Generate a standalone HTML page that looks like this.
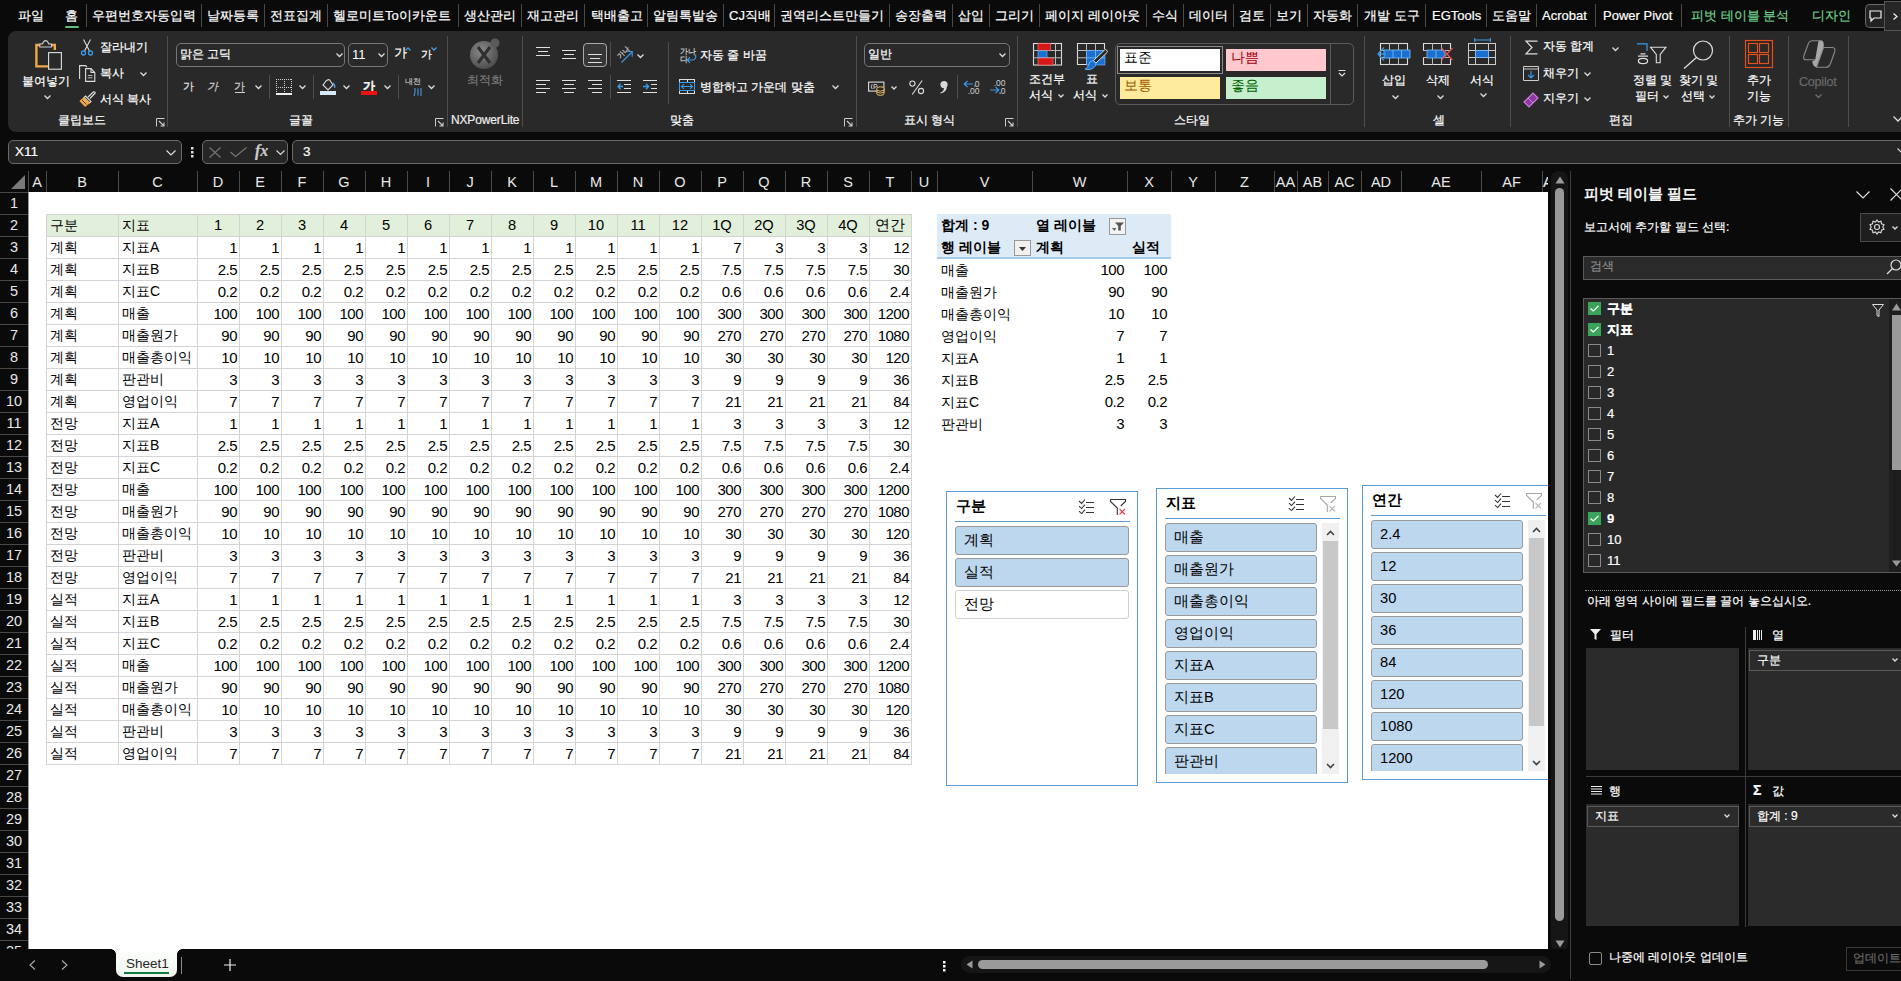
<!DOCTYPE html><html><head><meta charset="utf-8"><style>
*{margin:0;padding:0;box-sizing:border-box}
html,body{width:1901px;height:981px;overflow:hidden;background:#0a0a0a}
body{position:relative;font-family:"Liberation Sans",sans-serif;color:#fff}
div{position:absolute}
.t{white-space:nowrap;font-size:13px;line-height:16px}
.r{font-size:12px}
.t{-webkit-text-stroke:0.2px currentColor}
#sheet .t,.h{-webkit-text-stroke:0}
svg{position:absolute;overflow:visible}
</style></head><body><div class="t" style="left:18px;top:8px;">파일</div>
<div class="t" style="left:65px;top:8px;">홈</div>
<div class="t" style="left:92px;top:8px;">우편번호자동입력</div>
<div class="t" style="left:207px;top:8px;">날짜등록</div>
<div class="t" style="left:270px;top:8px;">전표집계</div>
<div class="t" style="left:333px;top:8px;">헬로미트To이카운트</div>
<div class="t" style="left:464px;top:8px;">생산관리</div>
<div class="t" style="left:527px;top:8px;">재고관리</div>
<div class="t" style="left:591px;top:8px;">택배출고</div>
<div class="t" style="left:653px;top:8px;">알림톡발송</div>
<div class="t" style="left:729px;top:8px;">CJ직배</div>
<div class="t" style="left:780px;top:8px;">권역리스트만들기</div>
<div class="t" style="left:895px;top:8px;">송장출력</div>
<div class="t" style="left:958px;top:8px;">삽입</div>
<div class="t" style="left:995px;top:8px;">그리기</div>
<div class="t" style="left:1045px;top:8px;">페이지 레이아웃</div>
<div class="t" style="left:1152px;top:8px;">수식</div>
<div class="t" style="left:1189px;top:8px;">데이터</div>
<div class="t" style="left:1239px;top:8px;">검토</div>
<div class="t" style="left:1276px;top:8px;">보기</div>
<div class="t" style="left:1313px;top:8px;">자동화</div>
<div class="t" style="left:1364px;top:8px;">개발 도구</div>
<div class="t" style="left:1432px;top:8px;">EGTools</div>
<div class="t" style="left:1492px;top:8px;">도움말</div>
<div class="t" style="left:1542px;top:8px;">Acrobat</div>
<div class="t" style="left:1603px;top:8px;">Power Pivot</div>
<div style="left:86px;top:4px;width:1px;height:23px;background:#4a4a4a"></div>
<div style="left:201px;top:4px;width:1px;height:23px;background:#4a4a4a"></div>
<div style="left:264px;top:4px;width:1px;height:23px;background:#4a4a4a"></div>
<div style="left:327px;top:4px;width:1px;height:23px;background:#4a4a4a"></div>
<div style="left:458px;top:4px;width:1px;height:23px;background:#4a4a4a"></div>
<div style="left:521px;top:4px;width:1px;height:23px;background:#4a4a4a"></div>
<div style="left:584px;top:4px;width:1px;height:23px;background:#4a4a4a"></div>
<div style="left:647px;top:4px;width:1px;height:23px;background:#4a4a4a"></div>
<div style="left:723px;top:4px;width:1px;height:23px;background:#4a4a4a"></div>
<div style="left:774px;top:4px;width:1px;height:23px;background:#4a4a4a"></div>
<div style="left:889px;top:4px;width:1px;height:23px;background:#4a4a4a"></div>
<div style="left:952px;top:4px;width:1px;height:23px;background:#4a4a4a"></div>
<div style="left:989px;top:4px;width:1px;height:23px;background:#4a4a4a"></div>
<div style="left:1039px;top:4px;width:1px;height:23px;background:#4a4a4a"></div>
<div style="left:1146px;top:4px;width:1px;height:23px;background:#4a4a4a"></div>
<div style="left:1183px;top:4px;width:1px;height:23px;background:#4a4a4a"></div>
<div style="left:1233px;top:4px;width:1px;height:23px;background:#4a4a4a"></div>
<div style="left:1270px;top:4px;width:1px;height:23px;background:#4a4a4a"></div>
<div style="left:1307px;top:4px;width:1px;height:23px;background:#4a4a4a"></div>
<div style="left:1357px;top:4px;width:1px;height:23px;background:#4a4a4a"></div>
<div style="left:1425px;top:4px;width:1px;height:23px;background:#4a4a4a"></div>
<div style="left:1486px;top:4px;width:1px;height:23px;background:#4a4a4a"></div>
<div style="left:1536px;top:4px;width:1px;height:23px;background:#4a4a4a"></div>
<div style="left:1595px;top:4px;width:1px;height:23px;background:#4a4a4a"></div>
<div style="left:1681px;top:4px;width:1px;height:23px;background:#4a4a4a"></div>
<div class="t" style="left:1691px;top:8px;color:#6fd08c">피벗 테이블 분석</div>
<div class="t" style="left:1812px;top:8px;color:#6fd08c">디자인</div>
<div style="left:65px;top:26px;width:14px;height:2px;background:#5dbb7e;border-radius:1px"></div>
<div style="left:1865px;top:4px;width:22px;height:24px;border:1px solid #6a6a6a;border-right:none;border-radius:5px 0 0 5px;background:#222"></div>
<svg style="left:1869px;top:10px;" width="13" height="12" viewBox="0 0 13 12"><path d="M1 1 H12 V8 H5 L2 11 V8 H1 Z" fill="none" stroke="#eee" stroke-width="1.2"/></svg>
<div style="left:1884px;top:1px;width:17px;height:30px;background:#262626;border:1px solid #555;border-right:none"></div>
<svg style="left:1893px;top:13px;" width="5" height="7" viewBox="0 0 5 7"><path d="M0.5 0.5 L4 3.5 L0.5 6.5" fill="none" stroke="#eee" stroke-width="1.2"/></svg>
<div style="left:8px;top:31px;width:1901px;height:101px;background:#292929;border-radius:8px"></div>
<svg style="left:34px;top:40px;" width="30" height="31" viewBox="0 0 30 31"><path d="M20.8 10 V5 H2.4 V26.4 H14" fill="none" stroke="#f0a848" stroke-width="2.4"/>
<path d="M5.8 7 V4 H8.5 Q9.5 0.6 11.6 0.6 Q13.7 0.6 14.7 4 H17.5 V7 Z" fill="#292929" stroke="#ccc" stroke-width="1.1"/>
<rect x="14.6" y="12.6" width="12.8" height="16.6" fill="#292929" stroke="#e0e0e0" stroke-width="1.1"/></svg>
<div class="t r" style="left:22px;top:73px;">붙여넣기</div>
<svg style="left:44px;top:95px;" width="7" height="4.5" viewBox="0 0 7 4.5"><path d="M0.5 0.5 L3.5 3.5 L6.5 0.5" fill="none" stroke="#ddd" stroke-width="1.3"/></svg>
<svg style="left:81px;top:39px;" width="12" height="17" viewBox="0 0 12 17"><path d="M2.5 0.5 L8.5 12 M9.5 0.5 L3.5 12" stroke="#ddd" stroke-width="1.1" fill="none"/>
<circle cx="2.5" cy="14" r="2" fill="none" stroke="#3a9ae8" stroke-width="1.3"/><circle cx="9.5" cy="14" r="2" fill="none" stroke="#3a9ae8" stroke-width="1.3"/></svg>
<div class="t r" style="left:100px;top:39px;">잘라내기</div>
<svg style="left:79px;top:65px;" width="17" height="17" viewBox="0 0 17 17"><path d="M0.6 14 V0.6 H6.5 L8 2" fill="none" stroke="#ddd" stroke-width="1.1"/>
<path d="M6.6 3.6 H12 L15.8 7.4 V16.4 H6.6 Z M12 3.6 V7.4 H15.8" fill="#292929" stroke="#ddd" stroke-width="1.1"/><path d="M8.8 10.5 H13.5 M8.8 12.8 H13.5" stroke="#ccc" stroke-width="0.9"/></svg>
<div class="t r" style="left:100px;top:65px;">복사</div>
<svg style="left:140px;top:72px;" width="7" height="4.5" viewBox="0 0 7 4.5"><path d="M0.5 0.5 L3.5 3.5 L6.5 0.5" fill="none" stroke="#ddd" stroke-width="1.3"/></svg>
<svg style="left:79px;top:91px;" width="17" height="16" viewBox="0 0 17 16"><path d="M9 6 L14.5 0.8 Q16 0.5 16.2 2 L11 7.5" fill="none" stroke="#ddd" stroke-width="1.2"/>
<path d="M6.5 5 L12 10.5 L10.5 12 L5 6.5 Z" fill="none" stroke="#ddd" stroke-width="1.1"/>
<path d="M5 6.5 L10.5 12 Q8 14 6 15.5 L0.8 10 Q3 8 5 6.5 Z" fill="#f0a848" stroke="#f0a848" stroke-width="0.8"/>
<path d="M3 9 L7.5 13.5" stroke="#292929" stroke-width="0.8"/></svg>
<div class="t r" style="left:100px;top:91px;">서식 복사</div>
<div class="t r" style="left:58px;top:112px;">클립보드</div>
<svg style="left:156px;top:118px;" width="9" height="9" viewBox="0 0 9 9"><path d="M0.5 8.5 V0.5 H8.5" fill="none" stroke="#ccc" stroke-width="1"/><path d="M3 3 L8 8 M8 4.5 V8 H4.5" fill="none" stroke="#ccc" stroke-width="1.1"/></svg>
<div style="left:167px;top:36px;width:1px;height:91px;background:#4d4d4d"></div>
<div style="left:176px;top:43px;width:169px;height:24px;border:1px solid #777;border-radius:5px"></div>
<div class="t r" style="left:180px;top:46px;">맑은 고딕</div>
<svg style="left:336px;top:53px;" width="7" height="4.5" viewBox="0 0 7 4.5"><path d="M0.5 0.5 L3.5 3.5 L6.5 0.5" fill="none" stroke="#ddd" stroke-width="1.3"/></svg>
<div style="left:348px;top:43px;width:40px;height:24px;border:1px solid #777;border-radius:5px"></div>
<div class="t r" style="left:352px;top:47px;font-size:13px;-webkit-text-stroke:0">11</div>
<svg style="left:378px;top:53px;" width="7" height="4.5" viewBox="0 0 7 4.5"><path d="M0.5 0.5 L3.5 3.5 L6.5 0.5" fill="none" stroke="#ddd" stroke-width="1.3"/></svg>
<div class="t r" style="left:394px;top:45px;font-size:12.5px">가</div>
<svg style="left:405px;top:47px;" width="6" height="4" viewBox="0 0 6 4"><path d="M0.5 3.5 L3 0.8 L5.5 3.5" fill="none" stroke="#49a3f0" stroke-width="1.2"/></svg>
<div class="t r" style="left:421px;top:46px;font-size:11px">가</div>
<svg style="left:431px;top:47px;" width="6" height="4" viewBox="0 0 6 4"><path d="M0.5 0.5 L3 3.2 L5.5 0.5" fill="none" stroke="#49a3f0" stroke-width="1.2"/></svg>
<div class="t r" style="left:183px;top:78px;font-size:11px;color:#e0e0e0">가</div>
<div class="t r" style="left:208px;top:78px;font-size:11px;color:#d0d0d0;transform:skewX(-14deg)">가</div>
<div class="t r" style="left:234px;top:78px;font-size:11px;color:#d0d0d0">가</div>
<div style="left:235px;top:92px;width:10px;height:1px;background:#d0d0d0"></div>
<svg style="left:255px;top:85px;" width="7" height="4.5" viewBox="0 0 7 4.5"><path d="M0.5 0.5 L3.5 3.5 L6.5 0.5" fill="none" stroke="#ddd" stroke-width="1.3"/></svg>
<div style="left:269px;top:75px;width:1px;height:24px;background:#4d4d4d"></div>
<svg style="left:276px;top:79px;" width="16" height="16" viewBox="0 0 16 16"><g shape-rendering="crispEdges"><path d="M0.5 0 V15 M15.5 0 V15 M0 0.5 H16 M8.5 0 V15 M0 8.5 H16" fill="none" stroke="#d0d0d0" stroke-width="1" stroke-dasharray="1 1"/><path d="M0 15 H16" stroke="#f0f0f0" stroke-width="1.6"/></g></svg>
<svg style="left:299px;top:85px;" width="7" height="4.5" viewBox="0 0 7 4.5"><path d="M0.5 0.5 L3.5 3.5 L6.5 0.5" fill="none" stroke="#ddd" stroke-width="1.3"/></svg>
<div style="left:313px;top:75px;width:1px;height:24px;background:#4d4d4d"></div>
<svg style="left:320px;top:78px;" width="17" height="18" viewBox="0 0 17 18"><path d="M6 3 L3 7 L8 12 L13 7 L10 2.5 Q9 1 7.5 2 Z" fill="none" stroke="#ddd" stroke-width="1.1"/><path d="M13 5 Q15.5 7 14.5 10" stroke="#4aa3f0" fill="none" stroke-width="1.3"/><rect x="0" y="13" width="16" height="4" fill="#d5e8f7"/></svg>
<svg style="left:343px;top:85px;" width="7" height="4.5" viewBox="0 0 7 4.5"><path d="M0.5 0.5 L3.5 3.5 L6.5 0.5" fill="none" stroke="#ddd" stroke-width="1.3"/></svg>
<div class="t r" style="left:363px;top:78px;font-size:11.5px;font-weight:bold;color:#eee">가</div>
<div style="left:361px;top:91px;width:16px;height:4px;background:#ee1111"></div>
<svg style="left:384px;top:85px;" width="7" height="4.5" viewBox="0 0 7 4.5"><path d="M0.5 0.5 L3.5 3.5 L6.5 0.5" fill="none" stroke="#ddd" stroke-width="1.3"/></svg>
<div style="left:398px;top:75px;width:1px;height:24px;background:#4d4d4d"></div>
<div class="t r" style="left:405px;top:77px;font-size:8px;color:#bbb;line-height:10px">내천</div>
<svg style="left:414px;top:88px;" width="8" height="8" viewBox="0 0 8 8"><path d="M1 0 Q1.5 5 0 8 M4 0.5 V7.5 M7 0 V8" stroke="#4aa3f0" stroke-width="1" fill="none"/></svg>
<svg style="left:428px;top:85px;" width="7" height="4.5" viewBox="0 0 7 4.5"><path d="M0.5 0.5 L3.5 3.5 L6.5 0.5" fill="none" stroke="#ddd" stroke-width="1.3"/></svg>
<div class="t r" style="left:289px;top:112px;">글꼴</div>
<svg style="left:435px;top:118px;" width="9" height="9" viewBox="0 0 9 9"><path d="M0.5 8.5 V0.5 H8.5" fill="none" stroke="#ccc" stroke-width="1"/><path d="M3 3 L8 8 M8 4.5 V8 H4.5" fill="none" stroke="#ccc" stroke-width="1.1"/></svg>
<div style="left:447px;top:36px;width:1px;height:91px;background:#4d4d4d"></div>
<svg style="left:468px;top:38px;" width="34" height="32" viewBox="0 0 34 32"><defs><radialGradient id="g1" cx="40%" cy="35%" r="70%"><stop offset="0" stop-color="#8a8a8a"/><stop offset="1" stop-color="#4a4a4a"/></radialGradient></defs>
<circle cx="16" cy="17" r="14" fill="url(#g1)"/><circle cx="27" cy="5" r="4.5" fill="#5a5a5a"/>
<path d="M10 9 L22 25 M22 9 L10 25" stroke="#2f2f2f" stroke-width="3"/></svg>
<div class="t r" style="left:467px;top:72px;color:#7a7a7a">최적화</div>
<div class="t r" style="left:451px;top:112px;font-size:12px;letter-spacing:-0.15px;color:#eee">NXPowerLite</div>
<div style="left:522px;top:36px;width:1px;height:91px;background:#4d4d4d"></div>
<svg style="left:536px;top:46px;" width="14" height="12" viewBox="0 0 14 12"><g shape-rendering="crispEdges"><path d="M0 1.5 H14" stroke="#e0e0e0" stroke-width="1"/><path d="M2 5.5 H12" stroke="#e0e0e0" stroke-width="1"/><path d="M0 9.5 H14" stroke="#e0e0e0" stroke-width="1"/></g></svg>
<svg style="left:562px;top:49px;" width="14" height="12" viewBox="0 0 14 12"><g shape-rendering="crispEdges"><path d="M0 1.5 H14" stroke="#e0e0e0" stroke-width="1"/><path d="M2 5.5 H12" stroke="#e0e0e0" stroke-width="1"/><path d="M0 9.5 H14" stroke="#e0e0e0" stroke-width="1"/></g></svg>
<div style="left:583px;top:43px;width:24px;height:24px;border:1px solid #aaa;border-radius:4px;background:#363636"></div>
<svg style="left:588px;top:53px;" width="14" height="12" viewBox="0 0 14 12"><g shape-rendering="crispEdges"><path d="M0 1.5 H14" stroke="#e0e0e0" stroke-width="1"/><path d="M2 5.5 H12" stroke="#e0e0e0" stroke-width="1"/><path d="M0 9.5 H14" stroke="#e0e0e0" stroke-width="1"/></g></svg>
<div style="left:610px;top:42px;width:1px;height:25px;background:#4d4d4d"></div>
<svg style="left:616px;top:46px;" width="18" height="18" viewBox="0 0 18 18"><path d="M5.5 16.5 L15.5 6.5 M11 5.5 H16.2 V10.7" stroke="#3a9ae8" stroke-width="1.2" fill="none"/></svg>
<div class="t r" style="left:617px;top:49px;font-size:7px;color:#ccc;transform:rotate(-45deg);line-height:8px">가나</div>
<svg style="left:637px;top:54px;" width="7" height="4.5" viewBox="0 0 7 4.5"><path d="M0.5 0.5 L3.5 3.5 L6.5 0.5" fill="none" stroke="#ddd" stroke-width="1.3"/></svg>
<svg style="left:536px;top:80px;" width="14" height="14" viewBox="0 0 14 14"><g shape-rendering="crispEdges"><path d="M0 0.5 H14" stroke="#e0e0e0" stroke-width="1"/><path d="M0 4.5 H10" stroke="#e0e0e0" stroke-width="1"/><path d="M0 8.5 H14" stroke="#e0e0e0" stroke-width="1"/><path d="M0 12.5 H10" stroke="#e0e0e0" stroke-width="1"/></g></svg>
<svg style="left:562px;top:80px;" width="14" height="14" viewBox="0 0 14 14"><g shape-rendering="crispEdges"><path d="M0 0.5 H14" stroke="#e0e0e0" stroke-width="1"/><path d="M2 4.5 H12" stroke="#e0e0e0" stroke-width="1"/><path d="M0 8.5 H14" stroke="#e0e0e0" stroke-width="1"/><path d="M2 12.5 H12" stroke="#e0e0e0" stroke-width="1"/></g></svg>
<svg style="left:588px;top:80px;" width="14" height="14" viewBox="0 0 14 14"><g shape-rendering="crispEdges"><path d="M0 0.5 H14" stroke="#e0e0e0" stroke-width="1"/><path d="M4 4.5 H14" stroke="#e0e0e0" stroke-width="1"/><path d="M0 8.5 H14" stroke="#e0e0e0" stroke-width="1"/><path d="M4 12.5 H14" stroke="#e0e0e0" stroke-width="1"/></g></svg>
<div style="left:610px;top:75px;width:1px;height:24px;background:#4d4d4d"></div>
<svg style="left:617px;top:80px;" width="14" height="14" viewBox="0 0 14 14"><g shape-rendering="crispEdges"><path d="M0 0.5 H14" stroke="#e0e0e0" stroke-width="1"/><path d="M7 4.5 H14" stroke="#e0e0e0" stroke-width="1"/><path d="M7 8.5 H14" stroke="#e0e0e0" stroke-width="1"/><path d="M0 12.5 H14" stroke="#e0e0e0" stroke-width="1"/></g><path d="M6 6.5 H1 M3.6 3.8 L1 6.5 L3.6 9.2" stroke="#3a9ae8" stroke-width="1.3" fill="none"/></svg>
<svg style="left:643px;top:80px;" width="14" height="14" viewBox="0 0 14 14"><g shape-rendering="crispEdges"><path d="M0 0.5 H14" stroke="#e0e0e0" stroke-width="1"/><path d="M8 4.5 H14" stroke="#e0e0e0" stroke-width="1"/><path d="M8 8.5 H14" stroke="#e0e0e0" stroke-width="1"/><path d="M0 12.5 H14" stroke="#e0e0e0" stroke-width="1"/></g><path d="M0 6.5 H5.5 M3 3.8 L5.6 6.5 L3 9.2" stroke="#3a9ae8" stroke-width="1.3" fill="none"/></svg>
<div style="left:668px;top:42px;width:1px;height:62px;background:#4d4d4d"></div>
<div class="t r" style="left:680px;top:48px;font-size:7.5px;color:#d0d0d0;line-height:8px">가나<br>다</div>
<svg style="left:686px;top:54px;" width="11" height="10" viewBox="0 0 11 10"><path d="M9.5 0.5 Q10.5 5 7 6 H1.5 M4 3.2 L1.2 6 L4 8.8" stroke="#3a9ae8" stroke-width="1.2" fill="none"/></svg>
<div class="t r" style="left:700px;top:47px;">자동 줄 바꿈</div>
<svg style="left:679px;top:79px;" width="16" height="15" viewBox="0 0 16 15"><g shape-rendering="crispEdges"><rect x="0.5" y="0.5" width="15" height="14" fill="none" stroke="#ddd"/><path d="M8 0 V3 M8 12 V15" stroke="#ddd"/><rect x="0.5" y="3.5" width="15" height="8" fill="none" stroke="#3a9ae8"/></g><path d="M2.5 7.5 H13.5 M5 5.2 L2.5 7.5 L5 9.8 M11 5.2 L13.5 7.5 L11 9.8" stroke="#3a9ae8" stroke-width="1.1" fill="none"/></svg>
<div class="t r" style="left:700px;top:79px;">병합하고 가운데 맞춤</div>
<svg style="left:832px;top:85px;" width="7" height="4.5" viewBox="0 0 7 4.5"><path d="M0.5 0.5 L3.5 3.5 L6.5 0.5" fill="none" stroke="#ddd" stroke-width="1.3"/></svg>
<div class="t r" style="left:670px;top:112px;">맞춤</div>
<svg style="left:844px;top:118px;" width="9" height="9" viewBox="0 0 9 9"><path d="M0.5 8.5 V0.5 H8.5" fill="none" stroke="#ccc" stroke-width="1"/><path d="M3 3 L8 8 M8 4.5 V8 H4.5" fill="none" stroke="#ccc" stroke-width="1.1"/></svg>
<div style="left:856px;top:36px;width:1px;height:91px;background:#4d4d4d"></div>
<div style="left:864px;top:43px;width:146px;height:24px;border:1px solid #777;border-radius:5px"></div>
<div class="t r" style="left:868px;top:46px;">일반</div>
<svg style="left:999px;top:53px;" width="7" height="4.5" viewBox="0 0 7 4.5"><path d="M0.5 0.5 L3.5 3.5 L6.5 0.5" fill="none" stroke="#ddd" stroke-width="1.3"/></svg>
<svg style="left:868px;top:81px;" width="18" height="15" viewBox="0 0 18 15"><rect x="0.6" y="1.1" width="15.3" height="9" fill="none" stroke="#ddd" stroke-width="1.1"/>
<path d="M4.2 3.3 Q2.4 5.6 4.2 8" fill="none" stroke="#ccc" stroke-width="1"/><path d="M6 8 V3.5 H8 Q9.2 3.5 9.2 4.8 Q9.2 6 8 6 H6" fill="none" stroke="#ccc" stroke-width="0.9"/>
<path d="M8.8 7.5 Q8.8 5.8 12.4 5.8 Q16 5.8 16 7.5 V12.6 Q16 14.3 12.4 14.3 Q8.8 14.3 8.8 12.6 Z" fill="#292929" stroke="#f3c46a" stroke-width="1"/>
<path d="M8.8 9.3 Q12.4 11 16 9.3 M8.8 11.2 Q12.4 12.9 16 11.2" fill="none" stroke="#f3c46a" stroke-width="0.9"/></svg>
<svg style="left:891px;top:86px;" width="6" height="4.0" viewBox="0 0 6 4.0"><path d="M0.5 0.5 L3.0 3.0 L5.5 0.5" fill="none" stroke="#ddd" stroke-width="1.3"/></svg>
<svg style="left:909px;top:80px;" width="16" height="15" viewBox="0 0 16 15"><circle cx="3.4" cy="3.6" r="2.6" fill="none" stroke="#ddd" stroke-width="1.1"/><circle cx="12" cy="11" r="2.6" fill="none" stroke="#ddd" stroke-width="1.1"/><path d="M13.2 0.5 L3.2 14.5" stroke="#ddd" stroke-width="1.1"/></svg>
<svg style="left:939px;top:80px;" width="9" height="14" viewBox="0 0 9 14"><circle cx="5" cy="4.6" r="3.6" fill="#d8d8d8"/><path d="M7.6 6.4 Q8.4 11.5 1.5 13.6 L1.2 12.8 Q5 11.2 5 8 Z" fill="#d8d8d8"/></svg>
<div style="left:957px;top:75px;width:1px;height:24px;background:#4d4d4d"></div>
<svg style="left:963px;top:79px;" width="18" height="16" viewBox="0 0 18 16"><path d="M10 5 H1.5 M4.5 2 L1.2 5 L4.5 8" stroke="#3a9ae8" stroke-width="1.2" fill="none"/>
<text x="16.5" y="7.6" font-family="Liberation Sans" font-size="8.5" fill="#d0d0d0" text-anchor="end">0</text>
<text x="16.5" y="15.2" font-family="Liberation Sans" font-size="8.5" fill="#d0d0d0" text-anchor="end">.00</text>
<rect x="11.3" y="6.4" width="1.2" height="1.2" fill="#d0d0d0"/></svg>
<svg style="left:989px;top:78px;" width="18" height="17" viewBox="0 0 18 17"><text x="16.5" y="7.6" font-family="Liberation Sans" font-size="8.5" fill="#d0d0d0" text-anchor="end">.00</text>
<text x="16.5" y="15.8" font-family="Liberation Sans" font-size="8.5" fill="#d0d0d0" text-anchor="end">0</text>
<path d="M1 12 H9.5 M6.5 9 L9.8 12 L6.5 15" stroke="#3a9ae8" stroke-width="1.2" fill="none"/><rect x="10.5" y="14.6" width="1.2" height="1.2" fill="#d0d0d0"/></svg>
<div class="t r" style="left:904px;top:112px;">표시 형식</div>
<svg style="left:1005px;top:118px;" width="9" height="9" viewBox="0 0 9 9"><path d="M0.5 8.5 V0.5 H8.5" fill="none" stroke="#ccc" stroke-width="1"/><path d="M3 3 L8 8 M8 4.5 V8 H4.5" fill="none" stroke="#ccc" stroke-width="1.1"/></svg>
<div style="left:1017px;top:36px;width:1px;height:91px;background:#4d4d4d"></div>
<svg style="left:1033px;top:43px;" width="29" height="23" viewBox="0 0 29 23"><rect x="0.5" y="0.5" width="28" height="21.5" fill="none" stroke="#ddd" stroke-width="1.1"/>
<path d="M22.5 0 V22 M0 7.5 H29 M0 14.8 H29" stroke="#bbb" stroke-width="1"/>
<rect x="5" y="0.5" width="12.5" height="7" fill="#d81818" stroke="#f08080" stroke-width="0.6"/>
<rect x="5" y="7.8" width="9" height="6.7" fill="#1a6fd0" stroke="#7cc0f8" stroke-width="0.6"/>
<rect x="5" y="15" width="15" height="7" fill="#d81818" stroke="#f08080" stroke-width="0.6"/></svg>
<div class="t r" style="left:1029px;top:71px;">조건부</div>
<div class="t r" style="left:1029px;top:87px;">서식</div>
<svg style="left:1058px;top:94px;" width="6" height="4.0" viewBox="0 0 6 4.0"><path d="M0.5 0.5 L3.0 3.0 L5.5 0.5" fill="none" stroke="#ddd" stroke-width="1.3"/></svg>
<svg style="left:1077px;top:43px;" width="32" height="28" viewBox="0 0 32 28"><path d="M27.5 6 V0.5 H0.5 V21.5 H10" fill="none" stroke="#ddd" stroke-width="1.1"/>
<path d="M9.5 0 V22 M18.5 0 V7 M0 7.5 H28 M0 14.8 H9" stroke="#bbb" stroke-width="1"/>
<rect x="9.5" y="7.5" width="18.5" height="14.5" fill="#1a6fd0" stroke="#7cc0f8" stroke-width="0.6"/>
<path d="M18.5 7.5 V22 M9.5 14.8 H28" stroke="#7cc0f8" stroke-width="0.8"/>
<path d="M29.5 7 Q31 8.5 30 9.5 L19 20 L16.5 17.5 L27.5 7 Q28.5 6 29.5 7 Z" fill="#292929" stroke="#ddd" stroke-width="1"/>
<path d="M16 17.5 L19 20.5 Q18.5 25 13 26.5 Q9.5 27 8 26 Q11 25 11.5 22 Q12.5 18 16 17.5 Z" fill="#1a6fd0" stroke="#7cc0f8" stroke-width="0.8"/></svg>
<div class="t r" style="left:1086px;top:71px;">표</div>
<div class="t r" style="left:1073px;top:87px;">서식</div>
<svg style="left:1102px;top:94px;" width="6" height="4.0" viewBox="0 0 6 4.0"><path d="M0.5 0.5 L3.0 3.0 L5.5 0.5" fill="none" stroke="#ddd" stroke-width="1.3"/></svg>
<div style="left:1115px;top:43px;width:239px;height:62px;border:1px solid #5a5a5a;border-radius:5px"></div>
<div style="left:1330px;top:43px;width:1px;height:62px;background:#5a5a5a"></div>
<svg style="left:1338px;top:70px;" width="8" height="7" viewBox="0 0 8 7"><path d="M0.5 0.5 H7.5" stroke="#ddd"/><path d="M1 3 L4 6 L7 3" fill="none" stroke="#ddd" stroke-width="1.2"/></svg>
<div style="left:1117px;top:46px;width:106px;height:28px;border:1px solid #8a8a8a"></div>
<div style="left:1120px;top:49px;width:100px;height:22px;background:#fff"></div>
<div class="t r" style="left:1124px;top:49px;-webkit-text-stroke:0;font-size:14px;color:#000">표준</div>
<div style="left:1226px;top:49px;width:100px;height:22px;background:#ffc7ce"></div>
<div class="t r" style="left:1231px;top:49px;-webkit-text-stroke:0;font-size:14px;color:#9c0006">나쁨</div>
<div style="left:1120px;top:77px;width:100px;height:22px;background:#ffeb9c"></div>
<div class="t r" style="left:1124px;top:77px;-webkit-text-stroke:0;font-size:14px;color:#9c5700">보통</div>
<div style="left:1226px;top:77px;width:100px;height:22px;background:#c6efce"></div>
<div class="t r" style="left:1231px;top:77px;-webkit-text-stroke:0;font-size:14px;color:#006100">좋음</div>
<div class="t r" style="left:1174px;top:112px;">스타일</div>
<div style="left:1364px;top:36px;width:1px;height:91px;background:#4d4d4d"></div>
<svg style="left:1377px;top:43px;" width="34" height="22" viewBox="0 0 34 22"><rect x="3.5" y="0.5" width="27" height="21" fill="none" stroke="#ddd" stroke-width="1.1"/>
<path d="M12.5 0 V22 M21.5 0 V22 M3 7.5 H31 M3 14.5 H31" stroke="#bbb"/>
<rect x="7" y="7" width="26" height="8" fill="#1a6fd0" stroke="#7cc0f8" stroke-width="0.8"/><path d="M16 7 V15 M24.5 7 V15" stroke="#7cc0f8" stroke-width="0.8"/>
<path d="M14 11 H1.5 M7 4.5 L1 11 L7 17.5" stroke="#3a9ae8" stroke-width="1.3" fill="none"/><path d="M9 9 H14 V13 H9" fill="#1a6fd0"/></svg>
<div class="t r" style="left:1382px;top:72px;">삽입</div>
<svg style="left:1392px;top:95px;" width="7" height="4.5" viewBox="0 0 7 4.5"><path d="M0.5 0.5 L3.5 3.5 L6.5 0.5" fill="none" stroke="#ddd" stroke-width="1.3"/></svg>
<svg style="left:1423px;top:43px;" width="32" height="22" viewBox="0 0 32 22"><path d="M0.5 7 V0.5 H27.5 V6 M0.5 15 V21.5 H27.5 V16" fill="none" stroke="#ddd" stroke-width="1.1"/>
<path d="M9.5 0 V7 M18.5 0 V7 M9.5 15 V22 M18.5 15 V22 M0 7.5 H6 M0 14.5 H6 M22 7.5 H28 M22 14.5 H28" stroke="#bbb"/>
<path d="M4 7 H19.5 L22.5 11 L19.5 15 H4 Z" fill="#1a6fd0" stroke="#7cc0f8" stroke-width="0.8"/><path d="M13 7 V15" stroke="#7cc0f8" stroke-width="0.8"/>
<path d="M18.5 5 L29.5 17 M29.5 5 L18.5 17" stroke="#e85050" stroke-width="1.2"/></svg>
<div class="t r" style="left:1426px;top:72px;">삭제</div>
<svg style="left:1437px;top:95px;" width="7" height="4.5" viewBox="0 0 7 4.5"><path d="M0.5 0.5 L3.5 3.5 L6.5 0.5" fill="none" stroke="#ddd" stroke-width="1.3"/></svg>
<svg style="left:1468px;top:43px;" width="28" height="22" viewBox="0 0 28 22"><rect x="0.5" y="0.5" width="27" height="21" fill="none" stroke="#ccc"/><path d="M7.5 0 V22" stroke="#ccc"/><path d="M20.5 0 V22" stroke="#ccc"/><path d="M0 7.5 H28" stroke="#ccc"/><path d="M0 14.5 H28" stroke="#ccc"/><rect x="7.5" y="7.5" width="13" height="7" fill="#1a6fd0" stroke="#7cc0f8" stroke-width="0.8"/></svg>
<svg style="left:1474px;top:38px;" width="17" height="4" viewBox="0 0 17 4"><path d="M0.7 0 V4 M16.3 0 V4 M0.7 2 H16.3" stroke="#3a9ae8" stroke-width="1.2"/></svg>
<div class="t r" style="left:1470px;top:72px;">서식</div>
<svg style="left:1480px;top:93px;" width="7" height="4.5" viewBox="0 0 7 4.5"><path d="M0.5 0.5 L3.5 3.5 L6.5 0.5" fill="none" stroke="#ddd" stroke-width="1.3"/></svg>
<div class="t r" style="left:1433px;top:112px;">셀</div>
<div style="left:1510px;top:36px;width:1px;height:91px;background:#4d4d4d"></div>
<svg style="left:1525px;top:40px;" width="13" height="15" viewBox="0 0 13 15"><path d="M12.5 1.2 H1 L7 7.5 L1 13.8 H12.5" fill="none" stroke="#ddd" stroke-width="1.2"/></svg>
<div class="t r" style="left:1543px;top:38px;">자동 합계</div>
<svg style="left:1612px;top:47px;" width="7" height="4.5" viewBox="0 0 7 4.5"><path d="M0.5 0.5 L3.5 3.5 L6.5 0.5" fill="none" stroke="#ddd" stroke-width="1.3"/></svg>
<svg style="left:1523px;top:66px;" width="16" height="15" viewBox="0 0 16 15"><path d="M0.5 0.5 H15.5 V14.5 H0.5 Z M0.5 3 H15.5" fill="none" stroke="#ccc"/><path d="M8 5 V12 M5 9 L8 12 L11 9" fill="none" stroke="#3a9ae8" stroke-width="1.2"/></svg>
<div class="t r" style="left:1543px;top:65px;">채우기</div>
<svg style="left:1584px;top:72px;" width="7" height="4.5" viewBox="0 0 7 4.5"><path d="M0.5 0.5 L3.5 3.5 L6.5 0.5" fill="none" stroke="#ddd" stroke-width="1.3"/></svg>
<svg style="left:1523px;top:91px;" width="16" height="16" viewBox="0 0 16 16"><path d="M1 11 L10 2 L15 7 L6 16 Z" fill="#8a3a9a" stroke="#d080e0" stroke-width="1.1"/><path d="M5 7 L10 12" stroke="#d080e0"/></svg>
<div class="t r" style="left:1543px;top:90px;">지우기</div>
<svg style="left:1584px;top:97px;" width="7" height="4.5" viewBox="0 0 7 4.5"><path d="M0.5 0.5 L3.5 3.5 L6.5 0.5" fill="none" stroke="#ddd" stroke-width="1.3"/></svg>
<svg style="left:1637px;top:43px;" width="30" height="22" viewBox="0 0 30 22"><path d="M0 0.8 H10 V8" stroke="#3a9ae8" fill="none" stroke-width="1.2"/>
<path d="M3.5 10.8 H8.5 M1 13.2 H11" stroke="#ddd" stroke-width="1.2"/><ellipse cx="6" cy="18" rx="4.6" ry="2.7" fill="none" stroke="#ddd" stroke-width="1.2"/>
<path d="M13.5 4.2 H29 L23.2 11.5 V19.8 H19.3 V11.5 Z" fill="none" stroke="#ddd" stroke-width="1.1"/></svg>
<div class="t r" style="left:1633px;top:72px;">정렬 및</div>
<div class="t r" style="left:1635px;top:88px;">필터</div>
<svg style="left:1663px;top:95px;" width="6" height="4.0" viewBox="0 0 6 4.0"><path d="M0.5 0.5 L3.0 3.0 L5.5 0.5" fill="none" stroke="#ddd" stroke-width="1.3"/></svg>
<svg style="left:1683px;top:40px;" width="30" height="29" viewBox="0 0 30 29"><circle cx="20" cy="10.5" r="9.5" fill="none" stroke="#ddd" stroke-width="1.2"/><path d="M13.5 17.5 L1 28.5" stroke="#ddd" stroke-width="1.3"/></svg>
<div class="t r" style="left:1679px;top:72px;">찾기 및</div>
<div class="t r" style="left:1681px;top:88px;">선택</div>
<svg style="left:1709px;top:95px;" width="6" height="4.0" viewBox="0 0 6 4.0"><path d="M0.5 0.5 L3.0 3.0 L5.5 0.5" fill="none" stroke="#ddd" stroke-width="1.3"/></svg>
<div class="t r" style="left:1609px;top:112px;">편집</div>
<div style="left:1729px;top:36px;width:1px;height:91px;background:#4d4d4d"></div>
<svg style="left:1745px;top:40px;" width="29" height="28" viewBox="0 0 29 28"><g fill="none" stroke="#e8501a" stroke-width="1.15"><rect x="0.5" y="0.5" width="27" height="27"/><rect x="3.5" y="3.5" width="9" height="9"/><rect x="14.5" y="3.5" width="9" height="9"/><rect x="3.5" y="14.5" width="9" height="9"/><rect x="14.5" y="14.5" width="9" height="9"/></g></svg>
<div class="t r" style="left:1747px;top:72px;">추가</div>
<div class="t r" style="left:1747px;top:88px;">기능</div>
<div class="t r" style="left:1733px;top:112px;">추가 기능</div>
<div style="left:1788px;top:36px;width:1px;height:91px;background:#4d4d4d"></div>
<svg style="left:1803px;top:40px;" width="33" height="28" viewBox="0 0 33 28"><path d="M15.5 0.8 L19 0.8 Q21.5 2 20.5 7.5 L13.5 27.3 Q10 26.5 9.2 21.5 L12.2 19.8 Z" fill="#a8a8a8"/>
<path d="M3 19.8 Q0 19.8 0.8 16 L5 4.5 Q6.2 0.8 9.8 0.8 L19 0.8 M12.2 19.8 L3 19.8" fill="none" stroke="#8a8a8a" stroke-width="1.1"/>
<path d="M13.5 27.3 L20.5 7.5 L29 7.5 Q32.8 7.5 31.8 11.5 L27.5 23.5 Q26.3 27.3 22.5 27.3 Z" fill="none" stroke="#8a8a8a" stroke-width="1.1"/></svg>
<div class="t r" style="left:1799px;top:74px;color:#6a6a6a;font-size:12.5px;letter-spacing:-0.2px">Copilot</div>
<svg style="left:1815px;top:94px;" width="7" height="4.5" viewBox="0 0 7 4.5"><path d="M0.5 0.5 L3.5 3.5 L6.5 0.5" fill="none" stroke="#6e6e6e" stroke-width="1.3"/></svg>
<div style="left:1848px;top:36px;width:1px;height:91px;background:#4d4d4d"></div>
<svg style="left:1893px;top:116px;" width="10" height="6.0" viewBox="0 0 10 6.0"><path d="M0.5 0.5 L5.0 5.0 L9.5 0.5" fill="none" stroke="#ddd" stroke-width="1.3"/></svg>
<div style="left:8px;top:140px;width:174px;height:24px;border:1px solid #6a6a6a;border-radius:5px;background:#262626"></div>
<div class="t" style="left:15px;top:144px;font-size:13.5px">X11</div>
<svg style="left:166px;top:150px;" width="10" height="6.0" viewBox="0 0 10 6.0"><path d="M0.5 0.5 L5.0 5.0 L9.5 0.5" fill="none" stroke="#ddd" stroke-width="1.2"/></svg>
<svg style="left:191px;top:147px;" width="3" height="11" viewBox="0 0 3 11"><rect x="0" y="0" width="2.5" height="2.5" fill="#ddd"/><rect x="0" y="4" width="2.5" height="2.5" fill="#ddd"/><rect x="0" y="8" width="2.5" height="2.5" fill="#ddd"/></svg>
<div style="left:202px;top:140px;width:86px;height:24px;border:1px solid #6a6a6a;border-radius:5px;background:#262626"></div>
<svg style="left:209px;top:147px;" width="12" height="11" viewBox="0 0 12 11"><path d="M0.5 0.5 L11.5 10.5 M11.5 0.5 L0.5 10.5" stroke="#777" stroke-width="1.1"/></svg>
<svg style="left:230px;top:147px;" width="17" height="10" viewBox="0 0 17 10"><path d="M0.5 5 L5.5 9.5 L16.5 0.5" stroke="#777" stroke-width="1.1" fill="none"/></svg>
<div class="t" style="left:255px;top:143px;font-family:'Liberation Serif',serif;font-size:16px;color:#ccc;font-weight:bold"><i>fx</i></div>
<svg style="left:276px;top:150px;" width="9" height="5.5" viewBox="0 0 9 5.5"><path d="M0.5 0.5 L4.5 4.5 L8.5 0.5" fill="none" stroke="#ddd" stroke-width="1.1"/></svg>
<div style="left:292px;top:140px;width:1620px;height:24px;border:1px solid #6a6a6a;border-radius:5px;background:#262626"></div>
<div class="t" style="left:303px;top:144px;font-size:13.5px">3</div>
<svg style="left:1897px;top:148px;" width="8" height="5.0" viewBox="0 0 8 5.0"><path d="M0.5 0.5 L4.0 4.0 L7.5 0.5" fill="none" stroke="#ddd" stroke-width="1.1"/></svg>
<div style="left:0;top:171px;width:1548px;height:21px;overflow:hidden">
<div class="t h" style="left:28px;top:2px;width:18px;text-align:center;font-size:14.5px;line-height:18px;color:#e8e8e8">A</div>
<div style="left:46px;top:0;width:1px;height:21px;background:#4a4a4a"></div>
<div class="t h" style="left:46px;top:2px;width:72px;text-align:center;font-size:14.5px;line-height:18px;color:#e8e8e8">B</div>
<div style="left:118px;top:0;width:1px;height:21px;background:#4a4a4a"></div>
<div class="t h" style="left:118px;top:2px;width:79px;text-align:center;font-size:14.5px;line-height:18px;color:#e8e8e8">C</div>
<div style="left:197px;top:0;width:1px;height:21px;background:#4a4a4a"></div>
<div class="t h" style="left:197px;top:2px;width:42px;text-align:center;font-size:14.5px;line-height:18px;color:#e8e8e8">D</div>
<div style="left:239px;top:0;width:1px;height:21px;background:#4a4a4a"></div>
<div class="t h" style="left:239px;top:2px;width:42px;text-align:center;font-size:14.5px;line-height:18px;color:#e8e8e8">E</div>
<div style="left:281px;top:0;width:1px;height:21px;background:#4a4a4a"></div>
<div class="t h" style="left:281px;top:2px;width:42px;text-align:center;font-size:14.5px;line-height:18px;color:#e8e8e8">F</div>
<div style="left:323px;top:0;width:1px;height:21px;background:#4a4a4a"></div>
<div class="t h" style="left:323px;top:2px;width:42px;text-align:center;font-size:14.5px;line-height:18px;color:#e8e8e8">G</div>
<div style="left:365px;top:0;width:1px;height:21px;background:#4a4a4a"></div>
<div class="t h" style="left:365px;top:2px;width:42px;text-align:center;font-size:14.5px;line-height:18px;color:#e8e8e8">H</div>
<div style="left:407px;top:0;width:1px;height:21px;background:#4a4a4a"></div>
<div class="t h" style="left:407px;top:2px;width:42px;text-align:center;font-size:14.5px;line-height:18px;color:#e8e8e8">I</div>
<div style="left:449px;top:0;width:1px;height:21px;background:#4a4a4a"></div>
<div class="t h" style="left:449px;top:2px;width:42px;text-align:center;font-size:14.5px;line-height:18px;color:#e8e8e8">J</div>
<div style="left:491px;top:0;width:1px;height:21px;background:#4a4a4a"></div>
<div class="t h" style="left:491px;top:2px;width:42px;text-align:center;font-size:14.5px;line-height:18px;color:#e8e8e8">K</div>
<div style="left:533px;top:0;width:1px;height:21px;background:#4a4a4a"></div>
<div class="t h" style="left:533px;top:2px;width:42px;text-align:center;font-size:14.5px;line-height:18px;color:#e8e8e8">L</div>
<div style="left:575px;top:0;width:1px;height:21px;background:#4a4a4a"></div>
<div class="t h" style="left:575px;top:2px;width:42px;text-align:center;font-size:14.5px;line-height:18px;color:#e8e8e8">M</div>
<div style="left:617px;top:0;width:1px;height:21px;background:#4a4a4a"></div>
<div class="t h" style="left:617px;top:2px;width:42px;text-align:center;font-size:14.5px;line-height:18px;color:#e8e8e8">N</div>
<div style="left:659px;top:0;width:1px;height:21px;background:#4a4a4a"></div>
<div class="t h" style="left:659px;top:2px;width:42px;text-align:center;font-size:14.5px;line-height:18px;color:#e8e8e8">O</div>
<div style="left:701px;top:0;width:1px;height:21px;background:#4a4a4a"></div>
<div class="t h" style="left:701px;top:2px;width:42px;text-align:center;font-size:14.5px;line-height:18px;color:#e8e8e8">P</div>
<div style="left:743px;top:0;width:1px;height:21px;background:#4a4a4a"></div>
<div class="t h" style="left:743px;top:2px;width:42px;text-align:center;font-size:14.5px;line-height:18px;color:#e8e8e8">Q</div>
<div style="left:785px;top:0;width:1px;height:21px;background:#4a4a4a"></div>
<div class="t h" style="left:785px;top:2px;width:42px;text-align:center;font-size:14.5px;line-height:18px;color:#e8e8e8">R</div>
<div style="left:827px;top:0;width:1px;height:21px;background:#4a4a4a"></div>
<div class="t h" style="left:827px;top:2px;width:42px;text-align:center;font-size:14.5px;line-height:18px;color:#e8e8e8">S</div>
<div style="left:869px;top:0;width:1px;height:21px;background:#4a4a4a"></div>
<div class="t h" style="left:869px;top:2px;width:42px;text-align:center;font-size:14.5px;line-height:18px;color:#e8e8e8">T</div>
<div style="left:911px;top:0;width:1px;height:21px;background:#4a4a4a"></div>
<div class="t h" style="left:911px;top:2px;width:26px;text-align:center;font-size:14.5px;line-height:18px;color:#e8e8e8">U</div>
<div style="left:937px;top:0;width:1px;height:21px;background:#4a4a4a"></div>
<div class="t h" style="left:937px;top:2px;width:95px;text-align:center;font-size:14.5px;line-height:18px;color:#e8e8e8">V</div>
<div style="left:1032px;top:0;width:1px;height:21px;background:#4a4a4a"></div>
<div class="t h" style="left:1032px;top:2px;width:95px;text-align:center;font-size:14.5px;line-height:18px;color:#e8e8e8">W</div>
<div style="left:1127px;top:0;width:1px;height:21px;background:#4a4a4a"></div>
<div class="t h" style="left:1127px;top:2px;width:44px;text-align:center;font-size:14.5px;line-height:18px;color:#e8e8e8">X</div>
<div style="left:1171px;top:0;width:1px;height:21px;background:#4a4a4a"></div>
<div class="t h" style="left:1171px;top:2px;width:44px;text-align:center;font-size:14.5px;line-height:18px;color:#e8e8e8">Y</div>
<div style="left:1215px;top:0;width:1px;height:21px;background:#4a4a4a"></div>
<div class="t h" style="left:1215px;top:2px;width:59px;text-align:center;font-size:14.5px;line-height:18px;color:#e8e8e8">Z</div>
<div style="left:1274px;top:0;width:1px;height:21px;background:#4a4a4a"></div>
<div class="t h" style="left:1274px;top:2px;width:23px;text-align:center;font-size:14.5px;line-height:18px;color:#e8e8e8">AA</div>
<div style="left:1297px;top:0;width:1px;height:21px;background:#4a4a4a"></div>
<div class="t h" style="left:1297px;top:2px;width:31px;text-align:center;font-size:14.5px;line-height:18px;color:#e8e8e8">AB</div>
<div style="left:1328px;top:0;width:1px;height:21px;background:#4a4a4a"></div>
<div class="t h" style="left:1328px;top:2px;width:33px;text-align:center;font-size:14.5px;line-height:18px;color:#e8e8e8">AC</div>
<div style="left:1361px;top:0;width:1px;height:21px;background:#4a4a4a"></div>
<div class="t h" style="left:1361px;top:2px;width:40px;text-align:center;font-size:14.5px;line-height:18px;color:#e8e8e8">AD</div>
<div style="left:1401px;top:0;width:1px;height:21px;background:#4a4a4a"></div>
<div class="t h" style="left:1401px;top:2px;width:80px;text-align:center;font-size:14.5px;line-height:18px;color:#e8e8e8">AE</div>
<div style="left:1481px;top:0;width:1px;height:21px;background:#4a4a4a"></div>
<div class="t h" style="left:1481px;top:2px;width:61px;text-align:center;font-size:14.5px;line-height:18px;color:#e8e8e8">AF</div>
<div style="left:1542px;top:0;width:1px;height:21px;background:#4a4a4a"></div>
<div class="t" style="left:1543px;top:2px;font-size:14.5px;line-height:18px;color:#e8e8e8">AG</div>
</div>
<svg style="left:11px;top:175px;" width="15" height="15" viewBox="0 0 15 15"><path d="M14 0 V14 H0 Z" fill="#7a7a7a"/></svg>
<div style="left:28px;top:171px;width:1px;height:21px;background:#4a4a4a"></div>
<div class="t h" style="left:0;top:194px;width:28px;text-align:center;font-size:14.5px;line-height:18px;color:#e8e8e8">1</div>
<div style="left:0px;top:192px;width:28px;height:1px;background:#484848"></div>
<div class="t h" style="left:0;top:216px;width:28px;text-align:center;font-size:14.5px;line-height:18px;color:#e8e8e8">2</div>
<div style="left:0px;top:214px;width:28px;height:1px;background:#484848"></div>
<div class="t h" style="left:0;top:238px;width:28px;text-align:center;font-size:14.5px;line-height:18px;color:#e8e8e8">3</div>
<div style="left:0px;top:236px;width:28px;height:1px;background:#484848"></div>
<div class="t h" style="left:0;top:260px;width:28px;text-align:center;font-size:14.5px;line-height:18px;color:#e8e8e8">4</div>
<div style="left:0px;top:258px;width:28px;height:1px;background:#484848"></div>
<div class="t h" style="left:0;top:282px;width:28px;text-align:center;font-size:14.5px;line-height:18px;color:#e8e8e8">5</div>
<div style="left:0px;top:280px;width:28px;height:1px;background:#484848"></div>
<div class="t h" style="left:0;top:304px;width:28px;text-align:center;font-size:14.5px;line-height:18px;color:#e8e8e8">6</div>
<div style="left:0px;top:302px;width:28px;height:1px;background:#484848"></div>
<div class="t h" style="left:0;top:326px;width:28px;text-align:center;font-size:14.5px;line-height:18px;color:#e8e8e8">7</div>
<div style="left:0px;top:324px;width:28px;height:1px;background:#484848"></div>
<div class="t h" style="left:0;top:348px;width:28px;text-align:center;font-size:14.5px;line-height:18px;color:#e8e8e8">8</div>
<div style="left:0px;top:346px;width:28px;height:1px;background:#484848"></div>
<div class="t h" style="left:0;top:370px;width:28px;text-align:center;font-size:14.5px;line-height:18px;color:#e8e8e8">9</div>
<div style="left:0px;top:368px;width:28px;height:1px;background:#484848"></div>
<div class="t h" style="left:0;top:392px;width:28px;text-align:center;font-size:14.5px;line-height:18px;color:#e8e8e8">10</div>
<div style="left:0px;top:390px;width:28px;height:1px;background:#484848"></div>
<div class="t h" style="left:0;top:414px;width:28px;text-align:center;font-size:14.5px;line-height:18px;color:#e8e8e8">11</div>
<div style="left:0px;top:412px;width:28px;height:1px;background:#484848"></div>
<div class="t h" style="left:0;top:436px;width:28px;text-align:center;font-size:14.5px;line-height:18px;color:#e8e8e8">12</div>
<div style="left:0px;top:434px;width:28px;height:1px;background:#484848"></div>
<div class="t h" style="left:0;top:458px;width:28px;text-align:center;font-size:14.5px;line-height:18px;color:#e8e8e8">13</div>
<div style="left:0px;top:456px;width:28px;height:1px;background:#484848"></div>
<div class="t h" style="left:0;top:480px;width:28px;text-align:center;font-size:14.5px;line-height:18px;color:#e8e8e8">14</div>
<div style="left:0px;top:478px;width:28px;height:1px;background:#484848"></div>
<div class="t h" style="left:0;top:502px;width:28px;text-align:center;font-size:14.5px;line-height:18px;color:#e8e8e8">15</div>
<div style="left:0px;top:500px;width:28px;height:1px;background:#484848"></div>
<div class="t h" style="left:0;top:524px;width:28px;text-align:center;font-size:14.5px;line-height:18px;color:#e8e8e8">16</div>
<div style="left:0px;top:522px;width:28px;height:1px;background:#484848"></div>
<div class="t h" style="left:0;top:546px;width:28px;text-align:center;font-size:14.5px;line-height:18px;color:#e8e8e8">17</div>
<div style="left:0px;top:544px;width:28px;height:1px;background:#484848"></div>
<div class="t h" style="left:0;top:568px;width:28px;text-align:center;font-size:14.5px;line-height:18px;color:#e8e8e8">18</div>
<div style="left:0px;top:566px;width:28px;height:1px;background:#484848"></div>
<div class="t h" style="left:0;top:590px;width:28px;text-align:center;font-size:14.5px;line-height:18px;color:#e8e8e8">19</div>
<div style="left:0px;top:588px;width:28px;height:1px;background:#484848"></div>
<div class="t h" style="left:0;top:612px;width:28px;text-align:center;font-size:14.5px;line-height:18px;color:#e8e8e8">20</div>
<div style="left:0px;top:610px;width:28px;height:1px;background:#484848"></div>
<div class="t h" style="left:0;top:634px;width:28px;text-align:center;font-size:14.5px;line-height:18px;color:#e8e8e8">21</div>
<div style="left:0px;top:632px;width:28px;height:1px;background:#484848"></div>
<div class="t h" style="left:0;top:656px;width:28px;text-align:center;font-size:14.5px;line-height:18px;color:#e8e8e8">22</div>
<div style="left:0px;top:654px;width:28px;height:1px;background:#484848"></div>
<div class="t h" style="left:0;top:678px;width:28px;text-align:center;font-size:14.5px;line-height:18px;color:#e8e8e8">23</div>
<div style="left:0px;top:676px;width:28px;height:1px;background:#484848"></div>
<div class="t h" style="left:0;top:700px;width:28px;text-align:center;font-size:14.5px;line-height:18px;color:#e8e8e8">24</div>
<div style="left:0px;top:698px;width:28px;height:1px;background:#484848"></div>
<div class="t h" style="left:0;top:722px;width:28px;text-align:center;font-size:14.5px;line-height:18px;color:#e8e8e8">25</div>
<div style="left:0px;top:720px;width:28px;height:1px;background:#484848"></div>
<div class="t h" style="left:0;top:744px;width:28px;text-align:center;font-size:14.5px;line-height:18px;color:#e8e8e8">26</div>
<div style="left:0px;top:742px;width:28px;height:1px;background:#484848"></div>
<div class="t h" style="left:0;top:766px;width:28px;text-align:center;font-size:14.5px;line-height:18px;color:#e8e8e8">27</div>
<div style="left:0px;top:764px;width:28px;height:1px;background:#484848"></div>
<div class="t h" style="left:0;top:788px;width:28px;text-align:center;font-size:14.5px;line-height:18px;color:#e8e8e8">28</div>
<div style="left:0px;top:786px;width:28px;height:1px;background:#484848"></div>
<div class="t h" style="left:0;top:810px;width:28px;text-align:center;font-size:14.5px;line-height:18px;color:#e8e8e8">29</div>
<div style="left:0px;top:808px;width:28px;height:1px;background:#484848"></div>
<div class="t h" style="left:0;top:832px;width:28px;text-align:center;font-size:14.5px;line-height:18px;color:#e8e8e8">30</div>
<div style="left:0px;top:830px;width:28px;height:1px;background:#484848"></div>
<div class="t h" style="left:0;top:854px;width:28px;text-align:center;font-size:14.5px;line-height:18px;color:#e8e8e8">31</div>
<div style="left:0px;top:852px;width:28px;height:1px;background:#484848"></div>
<div class="t h" style="left:0;top:876px;width:28px;text-align:center;font-size:14.5px;line-height:18px;color:#e8e8e8">32</div>
<div style="left:0px;top:874px;width:28px;height:1px;background:#484848"></div>
<div class="t h" style="left:0;top:898px;width:28px;text-align:center;font-size:14.5px;line-height:18px;color:#e8e8e8">33</div>
<div style="left:0px;top:896px;width:28px;height:1px;background:#484848"></div>
<div class="t h" style="left:0;top:920px;width:28px;text-align:center;font-size:14.5px;line-height:18px;color:#e8e8e8">34</div>
<div style="left:0px;top:918px;width:28px;height:1px;background:#484848"></div>
<div class="t h" style="left:0;top:942px;width:28px;text-align:center;font-size:14.5px;line-height:18px;color:#e8e8e8">35</div>
<div style="left:0px;top:940px;width:28px;height:1px;background:#484848"></div>
<div style="left:28px;top:192px;width:1px;height:757px;background:#9a9a9a"></div>
<div id="sheet" style="left:29px;top:192px;width:1519px;height:757px;background:#fff;overflow:hidden;color:#000">
<div style="left:17px;top:22px;width:865px;height:22px;background:#e2efda"></div>
<div class="t" style="left:21px;top:25px;font-size:14px;line-height:17px">구분</div>
<div class="t" style="left:93px;top:25px;font-size:14px;line-height:17px">지표</div>
<div class="t" style="left:168px;top:25px;width:42px;text-align:center;font-size:14.67px;line-height:17px">1</div>
<div class="t" style="left:210px;top:25px;width:42px;text-align:center;font-size:14.67px;line-height:17px">2</div>
<div class="t" style="left:252px;top:25px;width:42px;text-align:center;font-size:14.67px;line-height:17px">3</div>
<div class="t" style="left:294px;top:25px;width:42px;text-align:center;font-size:14.67px;line-height:17px">4</div>
<div class="t" style="left:336px;top:25px;width:42px;text-align:center;font-size:14.67px;line-height:17px">5</div>
<div class="t" style="left:378px;top:25px;width:42px;text-align:center;font-size:14.67px;line-height:17px">6</div>
<div class="t" style="left:420px;top:25px;width:42px;text-align:center;font-size:14.67px;line-height:17px">7</div>
<div class="t" style="left:462px;top:25px;width:42px;text-align:center;font-size:14.67px;line-height:17px">8</div>
<div class="t" style="left:504px;top:25px;width:42px;text-align:center;font-size:14.67px;line-height:17px">9</div>
<div class="t" style="left:546px;top:25px;width:42px;text-align:center;font-size:14.67px;line-height:17px">10</div>
<div class="t" style="left:588px;top:25px;width:42px;text-align:center;font-size:14.67px;line-height:17px">11</div>
<div class="t" style="left:630px;top:25px;width:42px;text-align:center;font-size:14.67px;line-height:17px">12</div>
<div class="t" style="left:672px;top:25px;width:42px;text-align:center;font-size:14.67px;line-height:17px">1Q</div>
<div class="t" style="left:714px;top:25px;width:42px;text-align:center;font-size:14.67px;line-height:17px">2Q</div>
<div class="t" style="left:756px;top:25px;width:42px;text-align:center;font-size:14.67px;line-height:17px">3Q</div>
<div class="t" style="left:798px;top:25px;width:42px;text-align:center;font-size:14.67px;line-height:17px">4Q</div>
<div class="t" style="left:840px;top:25px;width:42px;text-align:center;font-size:14.67px;line-height:17px">연간</div>
<div class="t" style="left:21px;top:47px;font-size:14px;line-height:17px">계획</div>
<div class="t" style="left:93px;top:47px;font-size:14px;line-height:17px">지표A</div>
<div class="t" style="left:168px;top:47px;width:40px;text-align:right;font-size:15px;letter-spacing:-0.5px;line-height:17px">1</div>
<div class="t" style="left:210px;top:47px;width:40px;text-align:right;font-size:15px;letter-spacing:-0.5px;line-height:17px">1</div>
<div class="t" style="left:252px;top:47px;width:40px;text-align:right;font-size:15px;letter-spacing:-0.5px;line-height:17px">1</div>
<div class="t" style="left:294px;top:47px;width:40px;text-align:right;font-size:15px;letter-spacing:-0.5px;line-height:17px">1</div>
<div class="t" style="left:336px;top:47px;width:40px;text-align:right;font-size:15px;letter-spacing:-0.5px;line-height:17px">1</div>
<div class="t" style="left:378px;top:47px;width:40px;text-align:right;font-size:15px;letter-spacing:-0.5px;line-height:17px">1</div>
<div class="t" style="left:420px;top:47px;width:40px;text-align:right;font-size:15px;letter-spacing:-0.5px;line-height:17px">1</div>
<div class="t" style="left:462px;top:47px;width:40px;text-align:right;font-size:15px;letter-spacing:-0.5px;line-height:17px">1</div>
<div class="t" style="left:504px;top:47px;width:40px;text-align:right;font-size:15px;letter-spacing:-0.5px;line-height:17px">1</div>
<div class="t" style="left:546px;top:47px;width:40px;text-align:right;font-size:15px;letter-spacing:-0.5px;line-height:17px">1</div>
<div class="t" style="left:588px;top:47px;width:40px;text-align:right;font-size:15px;letter-spacing:-0.5px;line-height:17px">1</div>
<div class="t" style="left:630px;top:47px;width:40px;text-align:right;font-size:15px;letter-spacing:-0.5px;line-height:17px">1</div>
<div class="t" style="left:672px;top:47px;width:40px;text-align:right;font-size:15px;letter-spacing:-0.5px;line-height:17px">7</div>
<div class="t" style="left:714px;top:47px;width:40px;text-align:right;font-size:15px;letter-spacing:-0.5px;line-height:17px">3</div>
<div class="t" style="left:756px;top:47px;width:40px;text-align:right;font-size:15px;letter-spacing:-0.5px;line-height:17px">3</div>
<div class="t" style="left:798px;top:47px;width:40px;text-align:right;font-size:15px;letter-spacing:-0.5px;line-height:17px">3</div>
<div class="t" style="left:840px;top:47px;width:40px;text-align:right;font-size:15px;letter-spacing:-0.5px;line-height:17px">12</div>
<div class="t" style="left:21px;top:69px;font-size:14px;line-height:17px">계획</div>
<div class="t" style="left:93px;top:69px;font-size:14px;line-height:17px">지표B</div>
<div class="t" style="left:168px;top:69px;width:40px;text-align:right;font-size:15px;letter-spacing:-0.5px;line-height:17px">2.5</div>
<div class="t" style="left:210px;top:69px;width:40px;text-align:right;font-size:15px;letter-spacing:-0.5px;line-height:17px">2.5</div>
<div class="t" style="left:252px;top:69px;width:40px;text-align:right;font-size:15px;letter-spacing:-0.5px;line-height:17px">2.5</div>
<div class="t" style="left:294px;top:69px;width:40px;text-align:right;font-size:15px;letter-spacing:-0.5px;line-height:17px">2.5</div>
<div class="t" style="left:336px;top:69px;width:40px;text-align:right;font-size:15px;letter-spacing:-0.5px;line-height:17px">2.5</div>
<div class="t" style="left:378px;top:69px;width:40px;text-align:right;font-size:15px;letter-spacing:-0.5px;line-height:17px">2.5</div>
<div class="t" style="left:420px;top:69px;width:40px;text-align:right;font-size:15px;letter-spacing:-0.5px;line-height:17px">2.5</div>
<div class="t" style="left:462px;top:69px;width:40px;text-align:right;font-size:15px;letter-spacing:-0.5px;line-height:17px">2.5</div>
<div class="t" style="left:504px;top:69px;width:40px;text-align:right;font-size:15px;letter-spacing:-0.5px;line-height:17px">2.5</div>
<div class="t" style="left:546px;top:69px;width:40px;text-align:right;font-size:15px;letter-spacing:-0.5px;line-height:17px">2.5</div>
<div class="t" style="left:588px;top:69px;width:40px;text-align:right;font-size:15px;letter-spacing:-0.5px;line-height:17px">2.5</div>
<div class="t" style="left:630px;top:69px;width:40px;text-align:right;font-size:15px;letter-spacing:-0.5px;line-height:17px">2.5</div>
<div class="t" style="left:672px;top:69px;width:40px;text-align:right;font-size:15px;letter-spacing:-0.5px;line-height:17px">7.5</div>
<div class="t" style="left:714px;top:69px;width:40px;text-align:right;font-size:15px;letter-spacing:-0.5px;line-height:17px">7.5</div>
<div class="t" style="left:756px;top:69px;width:40px;text-align:right;font-size:15px;letter-spacing:-0.5px;line-height:17px">7.5</div>
<div class="t" style="left:798px;top:69px;width:40px;text-align:right;font-size:15px;letter-spacing:-0.5px;line-height:17px">7.5</div>
<div class="t" style="left:840px;top:69px;width:40px;text-align:right;font-size:15px;letter-spacing:-0.5px;line-height:17px">30</div>
<div class="t" style="left:21px;top:91px;font-size:14px;line-height:17px">계획</div>
<div class="t" style="left:93px;top:91px;font-size:14px;line-height:17px">지표C</div>
<div class="t" style="left:168px;top:91px;width:40px;text-align:right;font-size:15px;letter-spacing:-0.5px;line-height:17px">0.2</div>
<div class="t" style="left:210px;top:91px;width:40px;text-align:right;font-size:15px;letter-spacing:-0.5px;line-height:17px">0.2</div>
<div class="t" style="left:252px;top:91px;width:40px;text-align:right;font-size:15px;letter-spacing:-0.5px;line-height:17px">0.2</div>
<div class="t" style="left:294px;top:91px;width:40px;text-align:right;font-size:15px;letter-spacing:-0.5px;line-height:17px">0.2</div>
<div class="t" style="left:336px;top:91px;width:40px;text-align:right;font-size:15px;letter-spacing:-0.5px;line-height:17px">0.2</div>
<div class="t" style="left:378px;top:91px;width:40px;text-align:right;font-size:15px;letter-spacing:-0.5px;line-height:17px">0.2</div>
<div class="t" style="left:420px;top:91px;width:40px;text-align:right;font-size:15px;letter-spacing:-0.5px;line-height:17px">0.2</div>
<div class="t" style="left:462px;top:91px;width:40px;text-align:right;font-size:15px;letter-spacing:-0.5px;line-height:17px">0.2</div>
<div class="t" style="left:504px;top:91px;width:40px;text-align:right;font-size:15px;letter-spacing:-0.5px;line-height:17px">0.2</div>
<div class="t" style="left:546px;top:91px;width:40px;text-align:right;font-size:15px;letter-spacing:-0.5px;line-height:17px">0.2</div>
<div class="t" style="left:588px;top:91px;width:40px;text-align:right;font-size:15px;letter-spacing:-0.5px;line-height:17px">0.2</div>
<div class="t" style="left:630px;top:91px;width:40px;text-align:right;font-size:15px;letter-spacing:-0.5px;line-height:17px">0.2</div>
<div class="t" style="left:672px;top:91px;width:40px;text-align:right;font-size:15px;letter-spacing:-0.5px;line-height:17px">0.6</div>
<div class="t" style="left:714px;top:91px;width:40px;text-align:right;font-size:15px;letter-spacing:-0.5px;line-height:17px">0.6</div>
<div class="t" style="left:756px;top:91px;width:40px;text-align:right;font-size:15px;letter-spacing:-0.5px;line-height:17px">0.6</div>
<div class="t" style="left:798px;top:91px;width:40px;text-align:right;font-size:15px;letter-spacing:-0.5px;line-height:17px">0.6</div>
<div class="t" style="left:840px;top:91px;width:40px;text-align:right;font-size:15px;letter-spacing:-0.5px;line-height:17px">2.4</div>
<div class="t" style="left:21px;top:113px;font-size:14px;line-height:17px">계획</div>
<div class="t" style="left:93px;top:113px;font-size:14px;line-height:17px">매출</div>
<div class="t" style="left:168px;top:113px;width:40px;text-align:right;font-size:15px;letter-spacing:-0.5px;line-height:17px">100</div>
<div class="t" style="left:210px;top:113px;width:40px;text-align:right;font-size:15px;letter-spacing:-0.5px;line-height:17px">100</div>
<div class="t" style="left:252px;top:113px;width:40px;text-align:right;font-size:15px;letter-spacing:-0.5px;line-height:17px">100</div>
<div class="t" style="left:294px;top:113px;width:40px;text-align:right;font-size:15px;letter-spacing:-0.5px;line-height:17px">100</div>
<div class="t" style="left:336px;top:113px;width:40px;text-align:right;font-size:15px;letter-spacing:-0.5px;line-height:17px">100</div>
<div class="t" style="left:378px;top:113px;width:40px;text-align:right;font-size:15px;letter-spacing:-0.5px;line-height:17px">100</div>
<div class="t" style="left:420px;top:113px;width:40px;text-align:right;font-size:15px;letter-spacing:-0.5px;line-height:17px">100</div>
<div class="t" style="left:462px;top:113px;width:40px;text-align:right;font-size:15px;letter-spacing:-0.5px;line-height:17px">100</div>
<div class="t" style="left:504px;top:113px;width:40px;text-align:right;font-size:15px;letter-spacing:-0.5px;line-height:17px">100</div>
<div class="t" style="left:546px;top:113px;width:40px;text-align:right;font-size:15px;letter-spacing:-0.5px;line-height:17px">100</div>
<div class="t" style="left:588px;top:113px;width:40px;text-align:right;font-size:15px;letter-spacing:-0.5px;line-height:17px">100</div>
<div class="t" style="left:630px;top:113px;width:40px;text-align:right;font-size:15px;letter-spacing:-0.5px;line-height:17px">100</div>
<div class="t" style="left:672px;top:113px;width:40px;text-align:right;font-size:15px;letter-spacing:-0.5px;line-height:17px">300</div>
<div class="t" style="left:714px;top:113px;width:40px;text-align:right;font-size:15px;letter-spacing:-0.5px;line-height:17px">300</div>
<div class="t" style="left:756px;top:113px;width:40px;text-align:right;font-size:15px;letter-spacing:-0.5px;line-height:17px">300</div>
<div class="t" style="left:798px;top:113px;width:40px;text-align:right;font-size:15px;letter-spacing:-0.5px;line-height:17px">300</div>
<div class="t" style="left:840px;top:113px;width:40px;text-align:right;font-size:15px;letter-spacing:-0.5px;line-height:17px">1200</div>
<div class="t" style="left:21px;top:135px;font-size:14px;line-height:17px">계획</div>
<div class="t" style="left:93px;top:135px;font-size:14px;line-height:17px">매출원가</div>
<div class="t" style="left:168px;top:135px;width:40px;text-align:right;font-size:15px;letter-spacing:-0.5px;line-height:17px">90</div>
<div class="t" style="left:210px;top:135px;width:40px;text-align:right;font-size:15px;letter-spacing:-0.5px;line-height:17px">90</div>
<div class="t" style="left:252px;top:135px;width:40px;text-align:right;font-size:15px;letter-spacing:-0.5px;line-height:17px">90</div>
<div class="t" style="left:294px;top:135px;width:40px;text-align:right;font-size:15px;letter-spacing:-0.5px;line-height:17px">90</div>
<div class="t" style="left:336px;top:135px;width:40px;text-align:right;font-size:15px;letter-spacing:-0.5px;line-height:17px">90</div>
<div class="t" style="left:378px;top:135px;width:40px;text-align:right;font-size:15px;letter-spacing:-0.5px;line-height:17px">90</div>
<div class="t" style="left:420px;top:135px;width:40px;text-align:right;font-size:15px;letter-spacing:-0.5px;line-height:17px">90</div>
<div class="t" style="left:462px;top:135px;width:40px;text-align:right;font-size:15px;letter-spacing:-0.5px;line-height:17px">90</div>
<div class="t" style="left:504px;top:135px;width:40px;text-align:right;font-size:15px;letter-spacing:-0.5px;line-height:17px">90</div>
<div class="t" style="left:546px;top:135px;width:40px;text-align:right;font-size:15px;letter-spacing:-0.5px;line-height:17px">90</div>
<div class="t" style="left:588px;top:135px;width:40px;text-align:right;font-size:15px;letter-spacing:-0.5px;line-height:17px">90</div>
<div class="t" style="left:630px;top:135px;width:40px;text-align:right;font-size:15px;letter-spacing:-0.5px;line-height:17px">90</div>
<div class="t" style="left:672px;top:135px;width:40px;text-align:right;font-size:15px;letter-spacing:-0.5px;line-height:17px">270</div>
<div class="t" style="left:714px;top:135px;width:40px;text-align:right;font-size:15px;letter-spacing:-0.5px;line-height:17px">270</div>
<div class="t" style="left:756px;top:135px;width:40px;text-align:right;font-size:15px;letter-spacing:-0.5px;line-height:17px">270</div>
<div class="t" style="left:798px;top:135px;width:40px;text-align:right;font-size:15px;letter-spacing:-0.5px;line-height:17px">270</div>
<div class="t" style="left:840px;top:135px;width:40px;text-align:right;font-size:15px;letter-spacing:-0.5px;line-height:17px">1080</div>
<div class="t" style="left:21px;top:157px;font-size:14px;line-height:17px">계획</div>
<div class="t" style="left:93px;top:157px;font-size:14px;line-height:17px">매출총이익</div>
<div class="t" style="left:168px;top:157px;width:40px;text-align:right;font-size:15px;letter-spacing:-0.5px;line-height:17px">10</div>
<div class="t" style="left:210px;top:157px;width:40px;text-align:right;font-size:15px;letter-spacing:-0.5px;line-height:17px">10</div>
<div class="t" style="left:252px;top:157px;width:40px;text-align:right;font-size:15px;letter-spacing:-0.5px;line-height:17px">10</div>
<div class="t" style="left:294px;top:157px;width:40px;text-align:right;font-size:15px;letter-spacing:-0.5px;line-height:17px">10</div>
<div class="t" style="left:336px;top:157px;width:40px;text-align:right;font-size:15px;letter-spacing:-0.5px;line-height:17px">10</div>
<div class="t" style="left:378px;top:157px;width:40px;text-align:right;font-size:15px;letter-spacing:-0.5px;line-height:17px">10</div>
<div class="t" style="left:420px;top:157px;width:40px;text-align:right;font-size:15px;letter-spacing:-0.5px;line-height:17px">10</div>
<div class="t" style="left:462px;top:157px;width:40px;text-align:right;font-size:15px;letter-spacing:-0.5px;line-height:17px">10</div>
<div class="t" style="left:504px;top:157px;width:40px;text-align:right;font-size:15px;letter-spacing:-0.5px;line-height:17px">10</div>
<div class="t" style="left:546px;top:157px;width:40px;text-align:right;font-size:15px;letter-spacing:-0.5px;line-height:17px">10</div>
<div class="t" style="left:588px;top:157px;width:40px;text-align:right;font-size:15px;letter-spacing:-0.5px;line-height:17px">10</div>
<div class="t" style="left:630px;top:157px;width:40px;text-align:right;font-size:15px;letter-spacing:-0.5px;line-height:17px">10</div>
<div class="t" style="left:672px;top:157px;width:40px;text-align:right;font-size:15px;letter-spacing:-0.5px;line-height:17px">30</div>
<div class="t" style="left:714px;top:157px;width:40px;text-align:right;font-size:15px;letter-spacing:-0.5px;line-height:17px">30</div>
<div class="t" style="left:756px;top:157px;width:40px;text-align:right;font-size:15px;letter-spacing:-0.5px;line-height:17px">30</div>
<div class="t" style="left:798px;top:157px;width:40px;text-align:right;font-size:15px;letter-spacing:-0.5px;line-height:17px">30</div>
<div class="t" style="left:840px;top:157px;width:40px;text-align:right;font-size:15px;letter-spacing:-0.5px;line-height:17px">120</div>
<div class="t" style="left:21px;top:179px;font-size:14px;line-height:17px">계획</div>
<div class="t" style="left:93px;top:179px;font-size:14px;line-height:17px">판관비</div>
<div class="t" style="left:168px;top:179px;width:40px;text-align:right;font-size:15px;letter-spacing:-0.5px;line-height:17px">3</div>
<div class="t" style="left:210px;top:179px;width:40px;text-align:right;font-size:15px;letter-spacing:-0.5px;line-height:17px">3</div>
<div class="t" style="left:252px;top:179px;width:40px;text-align:right;font-size:15px;letter-spacing:-0.5px;line-height:17px">3</div>
<div class="t" style="left:294px;top:179px;width:40px;text-align:right;font-size:15px;letter-spacing:-0.5px;line-height:17px">3</div>
<div class="t" style="left:336px;top:179px;width:40px;text-align:right;font-size:15px;letter-spacing:-0.5px;line-height:17px">3</div>
<div class="t" style="left:378px;top:179px;width:40px;text-align:right;font-size:15px;letter-spacing:-0.5px;line-height:17px">3</div>
<div class="t" style="left:420px;top:179px;width:40px;text-align:right;font-size:15px;letter-spacing:-0.5px;line-height:17px">3</div>
<div class="t" style="left:462px;top:179px;width:40px;text-align:right;font-size:15px;letter-spacing:-0.5px;line-height:17px">3</div>
<div class="t" style="left:504px;top:179px;width:40px;text-align:right;font-size:15px;letter-spacing:-0.5px;line-height:17px">3</div>
<div class="t" style="left:546px;top:179px;width:40px;text-align:right;font-size:15px;letter-spacing:-0.5px;line-height:17px">3</div>
<div class="t" style="left:588px;top:179px;width:40px;text-align:right;font-size:15px;letter-spacing:-0.5px;line-height:17px">3</div>
<div class="t" style="left:630px;top:179px;width:40px;text-align:right;font-size:15px;letter-spacing:-0.5px;line-height:17px">3</div>
<div class="t" style="left:672px;top:179px;width:40px;text-align:right;font-size:15px;letter-spacing:-0.5px;line-height:17px">9</div>
<div class="t" style="left:714px;top:179px;width:40px;text-align:right;font-size:15px;letter-spacing:-0.5px;line-height:17px">9</div>
<div class="t" style="left:756px;top:179px;width:40px;text-align:right;font-size:15px;letter-spacing:-0.5px;line-height:17px">9</div>
<div class="t" style="left:798px;top:179px;width:40px;text-align:right;font-size:15px;letter-spacing:-0.5px;line-height:17px">9</div>
<div class="t" style="left:840px;top:179px;width:40px;text-align:right;font-size:15px;letter-spacing:-0.5px;line-height:17px">36</div>
<div class="t" style="left:21px;top:201px;font-size:14px;line-height:17px">계획</div>
<div class="t" style="left:93px;top:201px;font-size:14px;line-height:17px">영업이익</div>
<div class="t" style="left:168px;top:201px;width:40px;text-align:right;font-size:15px;letter-spacing:-0.5px;line-height:17px">7</div>
<div class="t" style="left:210px;top:201px;width:40px;text-align:right;font-size:15px;letter-spacing:-0.5px;line-height:17px">7</div>
<div class="t" style="left:252px;top:201px;width:40px;text-align:right;font-size:15px;letter-spacing:-0.5px;line-height:17px">7</div>
<div class="t" style="left:294px;top:201px;width:40px;text-align:right;font-size:15px;letter-spacing:-0.5px;line-height:17px">7</div>
<div class="t" style="left:336px;top:201px;width:40px;text-align:right;font-size:15px;letter-spacing:-0.5px;line-height:17px">7</div>
<div class="t" style="left:378px;top:201px;width:40px;text-align:right;font-size:15px;letter-spacing:-0.5px;line-height:17px">7</div>
<div class="t" style="left:420px;top:201px;width:40px;text-align:right;font-size:15px;letter-spacing:-0.5px;line-height:17px">7</div>
<div class="t" style="left:462px;top:201px;width:40px;text-align:right;font-size:15px;letter-spacing:-0.5px;line-height:17px">7</div>
<div class="t" style="left:504px;top:201px;width:40px;text-align:right;font-size:15px;letter-spacing:-0.5px;line-height:17px">7</div>
<div class="t" style="left:546px;top:201px;width:40px;text-align:right;font-size:15px;letter-spacing:-0.5px;line-height:17px">7</div>
<div class="t" style="left:588px;top:201px;width:40px;text-align:right;font-size:15px;letter-spacing:-0.5px;line-height:17px">7</div>
<div class="t" style="left:630px;top:201px;width:40px;text-align:right;font-size:15px;letter-spacing:-0.5px;line-height:17px">7</div>
<div class="t" style="left:672px;top:201px;width:40px;text-align:right;font-size:15px;letter-spacing:-0.5px;line-height:17px">21</div>
<div class="t" style="left:714px;top:201px;width:40px;text-align:right;font-size:15px;letter-spacing:-0.5px;line-height:17px">21</div>
<div class="t" style="left:756px;top:201px;width:40px;text-align:right;font-size:15px;letter-spacing:-0.5px;line-height:17px">21</div>
<div class="t" style="left:798px;top:201px;width:40px;text-align:right;font-size:15px;letter-spacing:-0.5px;line-height:17px">21</div>
<div class="t" style="left:840px;top:201px;width:40px;text-align:right;font-size:15px;letter-spacing:-0.5px;line-height:17px">84</div>
<div class="t" style="left:21px;top:223px;font-size:14px;line-height:17px">전망</div>
<div class="t" style="left:93px;top:223px;font-size:14px;line-height:17px">지표A</div>
<div class="t" style="left:168px;top:223px;width:40px;text-align:right;font-size:15px;letter-spacing:-0.5px;line-height:17px">1</div>
<div class="t" style="left:210px;top:223px;width:40px;text-align:right;font-size:15px;letter-spacing:-0.5px;line-height:17px">1</div>
<div class="t" style="left:252px;top:223px;width:40px;text-align:right;font-size:15px;letter-spacing:-0.5px;line-height:17px">1</div>
<div class="t" style="left:294px;top:223px;width:40px;text-align:right;font-size:15px;letter-spacing:-0.5px;line-height:17px">1</div>
<div class="t" style="left:336px;top:223px;width:40px;text-align:right;font-size:15px;letter-spacing:-0.5px;line-height:17px">1</div>
<div class="t" style="left:378px;top:223px;width:40px;text-align:right;font-size:15px;letter-spacing:-0.5px;line-height:17px">1</div>
<div class="t" style="left:420px;top:223px;width:40px;text-align:right;font-size:15px;letter-spacing:-0.5px;line-height:17px">1</div>
<div class="t" style="left:462px;top:223px;width:40px;text-align:right;font-size:15px;letter-spacing:-0.5px;line-height:17px">1</div>
<div class="t" style="left:504px;top:223px;width:40px;text-align:right;font-size:15px;letter-spacing:-0.5px;line-height:17px">1</div>
<div class="t" style="left:546px;top:223px;width:40px;text-align:right;font-size:15px;letter-spacing:-0.5px;line-height:17px">1</div>
<div class="t" style="left:588px;top:223px;width:40px;text-align:right;font-size:15px;letter-spacing:-0.5px;line-height:17px">1</div>
<div class="t" style="left:630px;top:223px;width:40px;text-align:right;font-size:15px;letter-spacing:-0.5px;line-height:17px">1</div>
<div class="t" style="left:672px;top:223px;width:40px;text-align:right;font-size:15px;letter-spacing:-0.5px;line-height:17px">3</div>
<div class="t" style="left:714px;top:223px;width:40px;text-align:right;font-size:15px;letter-spacing:-0.5px;line-height:17px">3</div>
<div class="t" style="left:756px;top:223px;width:40px;text-align:right;font-size:15px;letter-spacing:-0.5px;line-height:17px">3</div>
<div class="t" style="left:798px;top:223px;width:40px;text-align:right;font-size:15px;letter-spacing:-0.5px;line-height:17px">3</div>
<div class="t" style="left:840px;top:223px;width:40px;text-align:right;font-size:15px;letter-spacing:-0.5px;line-height:17px">12</div>
<div class="t" style="left:21px;top:245px;font-size:14px;line-height:17px">전망</div>
<div class="t" style="left:93px;top:245px;font-size:14px;line-height:17px">지표B</div>
<div class="t" style="left:168px;top:245px;width:40px;text-align:right;font-size:15px;letter-spacing:-0.5px;line-height:17px">2.5</div>
<div class="t" style="left:210px;top:245px;width:40px;text-align:right;font-size:15px;letter-spacing:-0.5px;line-height:17px">2.5</div>
<div class="t" style="left:252px;top:245px;width:40px;text-align:right;font-size:15px;letter-spacing:-0.5px;line-height:17px">2.5</div>
<div class="t" style="left:294px;top:245px;width:40px;text-align:right;font-size:15px;letter-spacing:-0.5px;line-height:17px">2.5</div>
<div class="t" style="left:336px;top:245px;width:40px;text-align:right;font-size:15px;letter-spacing:-0.5px;line-height:17px">2.5</div>
<div class="t" style="left:378px;top:245px;width:40px;text-align:right;font-size:15px;letter-spacing:-0.5px;line-height:17px">2.5</div>
<div class="t" style="left:420px;top:245px;width:40px;text-align:right;font-size:15px;letter-spacing:-0.5px;line-height:17px">2.5</div>
<div class="t" style="left:462px;top:245px;width:40px;text-align:right;font-size:15px;letter-spacing:-0.5px;line-height:17px">2.5</div>
<div class="t" style="left:504px;top:245px;width:40px;text-align:right;font-size:15px;letter-spacing:-0.5px;line-height:17px">2.5</div>
<div class="t" style="left:546px;top:245px;width:40px;text-align:right;font-size:15px;letter-spacing:-0.5px;line-height:17px">2.5</div>
<div class="t" style="left:588px;top:245px;width:40px;text-align:right;font-size:15px;letter-spacing:-0.5px;line-height:17px">2.5</div>
<div class="t" style="left:630px;top:245px;width:40px;text-align:right;font-size:15px;letter-spacing:-0.5px;line-height:17px">2.5</div>
<div class="t" style="left:672px;top:245px;width:40px;text-align:right;font-size:15px;letter-spacing:-0.5px;line-height:17px">7.5</div>
<div class="t" style="left:714px;top:245px;width:40px;text-align:right;font-size:15px;letter-spacing:-0.5px;line-height:17px">7.5</div>
<div class="t" style="left:756px;top:245px;width:40px;text-align:right;font-size:15px;letter-spacing:-0.5px;line-height:17px">7.5</div>
<div class="t" style="left:798px;top:245px;width:40px;text-align:right;font-size:15px;letter-spacing:-0.5px;line-height:17px">7.5</div>
<div class="t" style="left:840px;top:245px;width:40px;text-align:right;font-size:15px;letter-spacing:-0.5px;line-height:17px">30</div>
<div class="t" style="left:21px;top:267px;font-size:14px;line-height:17px">전망</div>
<div class="t" style="left:93px;top:267px;font-size:14px;line-height:17px">지표C</div>
<div class="t" style="left:168px;top:267px;width:40px;text-align:right;font-size:15px;letter-spacing:-0.5px;line-height:17px">0.2</div>
<div class="t" style="left:210px;top:267px;width:40px;text-align:right;font-size:15px;letter-spacing:-0.5px;line-height:17px">0.2</div>
<div class="t" style="left:252px;top:267px;width:40px;text-align:right;font-size:15px;letter-spacing:-0.5px;line-height:17px">0.2</div>
<div class="t" style="left:294px;top:267px;width:40px;text-align:right;font-size:15px;letter-spacing:-0.5px;line-height:17px">0.2</div>
<div class="t" style="left:336px;top:267px;width:40px;text-align:right;font-size:15px;letter-spacing:-0.5px;line-height:17px">0.2</div>
<div class="t" style="left:378px;top:267px;width:40px;text-align:right;font-size:15px;letter-spacing:-0.5px;line-height:17px">0.2</div>
<div class="t" style="left:420px;top:267px;width:40px;text-align:right;font-size:15px;letter-spacing:-0.5px;line-height:17px">0.2</div>
<div class="t" style="left:462px;top:267px;width:40px;text-align:right;font-size:15px;letter-spacing:-0.5px;line-height:17px">0.2</div>
<div class="t" style="left:504px;top:267px;width:40px;text-align:right;font-size:15px;letter-spacing:-0.5px;line-height:17px">0.2</div>
<div class="t" style="left:546px;top:267px;width:40px;text-align:right;font-size:15px;letter-spacing:-0.5px;line-height:17px">0.2</div>
<div class="t" style="left:588px;top:267px;width:40px;text-align:right;font-size:15px;letter-spacing:-0.5px;line-height:17px">0.2</div>
<div class="t" style="left:630px;top:267px;width:40px;text-align:right;font-size:15px;letter-spacing:-0.5px;line-height:17px">0.2</div>
<div class="t" style="left:672px;top:267px;width:40px;text-align:right;font-size:15px;letter-spacing:-0.5px;line-height:17px">0.6</div>
<div class="t" style="left:714px;top:267px;width:40px;text-align:right;font-size:15px;letter-spacing:-0.5px;line-height:17px">0.6</div>
<div class="t" style="left:756px;top:267px;width:40px;text-align:right;font-size:15px;letter-spacing:-0.5px;line-height:17px">0.6</div>
<div class="t" style="left:798px;top:267px;width:40px;text-align:right;font-size:15px;letter-spacing:-0.5px;line-height:17px">0.6</div>
<div class="t" style="left:840px;top:267px;width:40px;text-align:right;font-size:15px;letter-spacing:-0.5px;line-height:17px">2.4</div>
<div class="t" style="left:21px;top:289px;font-size:14px;line-height:17px">전망</div>
<div class="t" style="left:93px;top:289px;font-size:14px;line-height:17px">매출</div>
<div class="t" style="left:168px;top:289px;width:40px;text-align:right;font-size:15px;letter-spacing:-0.5px;line-height:17px">100</div>
<div class="t" style="left:210px;top:289px;width:40px;text-align:right;font-size:15px;letter-spacing:-0.5px;line-height:17px">100</div>
<div class="t" style="left:252px;top:289px;width:40px;text-align:right;font-size:15px;letter-spacing:-0.5px;line-height:17px">100</div>
<div class="t" style="left:294px;top:289px;width:40px;text-align:right;font-size:15px;letter-spacing:-0.5px;line-height:17px">100</div>
<div class="t" style="left:336px;top:289px;width:40px;text-align:right;font-size:15px;letter-spacing:-0.5px;line-height:17px">100</div>
<div class="t" style="left:378px;top:289px;width:40px;text-align:right;font-size:15px;letter-spacing:-0.5px;line-height:17px">100</div>
<div class="t" style="left:420px;top:289px;width:40px;text-align:right;font-size:15px;letter-spacing:-0.5px;line-height:17px">100</div>
<div class="t" style="left:462px;top:289px;width:40px;text-align:right;font-size:15px;letter-spacing:-0.5px;line-height:17px">100</div>
<div class="t" style="left:504px;top:289px;width:40px;text-align:right;font-size:15px;letter-spacing:-0.5px;line-height:17px">100</div>
<div class="t" style="left:546px;top:289px;width:40px;text-align:right;font-size:15px;letter-spacing:-0.5px;line-height:17px">100</div>
<div class="t" style="left:588px;top:289px;width:40px;text-align:right;font-size:15px;letter-spacing:-0.5px;line-height:17px">100</div>
<div class="t" style="left:630px;top:289px;width:40px;text-align:right;font-size:15px;letter-spacing:-0.5px;line-height:17px">100</div>
<div class="t" style="left:672px;top:289px;width:40px;text-align:right;font-size:15px;letter-spacing:-0.5px;line-height:17px">300</div>
<div class="t" style="left:714px;top:289px;width:40px;text-align:right;font-size:15px;letter-spacing:-0.5px;line-height:17px">300</div>
<div class="t" style="left:756px;top:289px;width:40px;text-align:right;font-size:15px;letter-spacing:-0.5px;line-height:17px">300</div>
<div class="t" style="left:798px;top:289px;width:40px;text-align:right;font-size:15px;letter-spacing:-0.5px;line-height:17px">300</div>
<div class="t" style="left:840px;top:289px;width:40px;text-align:right;font-size:15px;letter-spacing:-0.5px;line-height:17px">1200</div>
<div class="t" style="left:21px;top:311px;font-size:14px;line-height:17px">전망</div>
<div class="t" style="left:93px;top:311px;font-size:14px;line-height:17px">매출원가</div>
<div class="t" style="left:168px;top:311px;width:40px;text-align:right;font-size:15px;letter-spacing:-0.5px;line-height:17px">90</div>
<div class="t" style="left:210px;top:311px;width:40px;text-align:right;font-size:15px;letter-spacing:-0.5px;line-height:17px">90</div>
<div class="t" style="left:252px;top:311px;width:40px;text-align:right;font-size:15px;letter-spacing:-0.5px;line-height:17px">90</div>
<div class="t" style="left:294px;top:311px;width:40px;text-align:right;font-size:15px;letter-spacing:-0.5px;line-height:17px">90</div>
<div class="t" style="left:336px;top:311px;width:40px;text-align:right;font-size:15px;letter-spacing:-0.5px;line-height:17px">90</div>
<div class="t" style="left:378px;top:311px;width:40px;text-align:right;font-size:15px;letter-spacing:-0.5px;line-height:17px">90</div>
<div class="t" style="left:420px;top:311px;width:40px;text-align:right;font-size:15px;letter-spacing:-0.5px;line-height:17px">90</div>
<div class="t" style="left:462px;top:311px;width:40px;text-align:right;font-size:15px;letter-spacing:-0.5px;line-height:17px">90</div>
<div class="t" style="left:504px;top:311px;width:40px;text-align:right;font-size:15px;letter-spacing:-0.5px;line-height:17px">90</div>
<div class="t" style="left:546px;top:311px;width:40px;text-align:right;font-size:15px;letter-spacing:-0.5px;line-height:17px">90</div>
<div class="t" style="left:588px;top:311px;width:40px;text-align:right;font-size:15px;letter-spacing:-0.5px;line-height:17px">90</div>
<div class="t" style="left:630px;top:311px;width:40px;text-align:right;font-size:15px;letter-spacing:-0.5px;line-height:17px">90</div>
<div class="t" style="left:672px;top:311px;width:40px;text-align:right;font-size:15px;letter-spacing:-0.5px;line-height:17px">270</div>
<div class="t" style="left:714px;top:311px;width:40px;text-align:right;font-size:15px;letter-spacing:-0.5px;line-height:17px">270</div>
<div class="t" style="left:756px;top:311px;width:40px;text-align:right;font-size:15px;letter-spacing:-0.5px;line-height:17px">270</div>
<div class="t" style="left:798px;top:311px;width:40px;text-align:right;font-size:15px;letter-spacing:-0.5px;line-height:17px">270</div>
<div class="t" style="left:840px;top:311px;width:40px;text-align:right;font-size:15px;letter-spacing:-0.5px;line-height:17px">1080</div>
<div class="t" style="left:21px;top:333px;font-size:14px;line-height:17px">전망</div>
<div class="t" style="left:93px;top:333px;font-size:14px;line-height:17px">매출총이익</div>
<div class="t" style="left:168px;top:333px;width:40px;text-align:right;font-size:15px;letter-spacing:-0.5px;line-height:17px">10</div>
<div class="t" style="left:210px;top:333px;width:40px;text-align:right;font-size:15px;letter-spacing:-0.5px;line-height:17px">10</div>
<div class="t" style="left:252px;top:333px;width:40px;text-align:right;font-size:15px;letter-spacing:-0.5px;line-height:17px">10</div>
<div class="t" style="left:294px;top:333px;width:40px;text-align:right;font-size:15px;letter-spacing:-0.5px;line-height:17px">10</div>
<div class="t" style="left:336px;top:333px;width:40px;text-align:right;font-size:15px;letter-spacing:-0.5px;line-height:17px">10</div>
<div class="t" style="left:378px;top:333px;width:40px;text-align:right;font-size:15px;letter-spacing:-0.5px;line-height:17px">10</div>
<div class="t" style="left:420px;top:333px;width:40px;text-align:right;font-size:15px;letter-spacing:-0.5px;line-height:17px">10</div>
<div class="t" style="left:462px;top:333px;width:40px;text-align:right;font-size:15px;letter-spacing:-0.5px;line-height:17px">10</div>
<div class="t" style="left:504px;top:333px;width:40px;text-align:right;font-size:15px;letter-spacing:-0.5px;line-height:17px">10</div>
<div class="t" style="left:546px;top:333px;width:40px;text-align:right;font-size:15px;letter-spacing:-0.5px;line-height:17px">10</div>
<div class="t" style="left:588px;top:333px;width:40px;text-align:right;font-size:15px;letter-spacing:-0.5px;line-height:17px">10</div>
<div class="t" style="left:630px;top:333px;width:40px;text-align:right;font-size:15px;letter-spacing:-0.5px;line-height:17px">10</div>
<div class="t" style="left:672px;top:333px;width:40px;text-align:right;font-size:15px;letter-spacing:-0.5px;line-height:17px">30</div>
<div class="t" style="left:714px;top:333px;width:40px;text-align:right;font-size:15px;letter-spacing:-0.5px;line-height:17px">30</div>
<div class="t" style="left:756px;top:333px;width:40px;text-align:right;font-size:15px;letter-spacing:-0.5px;line-height:17px">30</div>
<div class="t" style="left:798px;top:333px;width:40px;text-align:right;font-size:15px;letter-spacing:-0.5px;line-height:17px">30</div>
<div class="t" style="left:840px;top:333px;width:40px;text-align:right;font-size:15px;letter-spacing:-0.5px;line-height:17px">120</div>
<div class="t" style="left:21px;top:355px;font-size:14px;line-height:17px">전망</div>
<div class="t" style="left:93px;top:355px;font-size:14px;line-height:17px">판관비</div>
<div class="t" style="left:168px;top:355px;width:40px;text-align:right;font-size:15px;letter-spacing:-0.5px;line-height:17px">3</div>
<div class="t" style="left:210px;top:355px;width:40px;text-align:right;font-size:15px;letter-spacing:-0.5px;line-height:17px">3</div>
<div class="t" style="left:252px;top:355px;width:40px;text-align:right;font-size:15px;letter-spacing:-0.5px;line-height:17px">3</div>
<div class="t" style="left:294px;top:355px;width:40px;text-align:right;font-size:15px;letter-spacing:-0.5px;line-height:17px">3</div>
<div class="t" style="left:336px;top:355px;width:40px;text-align:right;font-size:15px;letter-spacing:-0.5px;line-height:17px">3</div>
<div class="t" style="left:378px;top:355px;width:40px;text-align:right;font-size:15px;letter-spacing:-0.5px;line-height:17px">3</div>
<div class="t" style="left:420px;top:355px;width:40px;text-align:right;font-size:15px;letter-spacing:-0.5px;line-height:17px">3</div>
<div class="t" style="left:462px;top:355px;width:40px;text-align:right;font-size:15px;letter-spacing:-0.5px;line-height:17px">3</div>
<div class="t" style="left:504px;top:355px;width:40px;text-align:right;font-size:15px;letter-spacing:-0.5px;line-height:17px">3</div>
<div class="t" style="left:546px;top:355px;width:40px;text-align:right;font-size:15px;letter-spacing:-0.5px;line-height:17px">3</div>
<div class="t" style="left:588px;top:355px;width:40px;text-align:right;font-size:15px;letter-spacing:-0.5px;line-height:17px">3</div>
<div class="t" style="left:630px;top:355px;width:40px;text-align:right;font-size:15px;letter-spacing:-0.5px;line-height:17px">3</div>
<div class="t" style="left:672px;top:355px;width:40px;text-align:right;font-size:15px;letter-spacing:-0.5px;line-height:17px">9</div>
<div class="t" style="left:714px;top:355px;width:40px;text-align:right;font-size:15px;letter-spacing:-0.5px;line-height:17px">9</div>
<div class="t" style="left:756px;top:355px;width:40px;text-align:right;font-size:15px;letter-spacing:-0.5px;line-height:17px">9</div>
<div class="t" style="left:798px;top:355px;width:40px;text-align:right;font-size:15px;letter-spacing:-0.5px;line-height:17px">9</div>
<div class="t" style="left:840px;top:355px;width:40px;text-align:right;font-size:15px;letter-spacing:-0.5px;line-height:17px">36</div>
<div class="t" style="left:21px;top:377px;font-size:14px;line-height:17px">전망</div>
<div class="t" style="left:93px;top:377px;font-size:14px;line-height:17px">영업이익</div>
<div class="t" style="left:168px;top:377px;width:40px;text-align:right;font-size:15px;letter-spacing:-0.5px;line-height:17px">7</div>
<div class="t" style="left:210px;top:377px;width:40px;text-align:right;font-size:15px;letter-spacing:-0.5px;line-height:17px">7</div>
<div class="t" style="left:252px;top:377px;width:40px;text-align:right;font-size:15px;letter-spacing:-0.5px;line-height:17px">7</div>
<div class="t" style="left:294px;top:377px;width:40px;text-align:right;font-size:15px;letter-spacing:-0.5px;line-height:17px">7</div>
<div class="t" style="left:336px;top:377px;width:40px;text-align:right;font-size:15px;letter-spacing:-0.5px;line-height:17px">7</div>
<div class="t" style="left:378px;top:377px;width:40px;text-align:right;font-size:15px;letter-spacing:-0.5px;line-height:17px">7</div>
<div class="t" style="left:420px;top:377px;width:40px;text-align:right;font-size:15px;letter-spacing:-0.5px;line-height:17px">7</div>
<div class="t" style="left:462px;top:377px;width:40px;text-align:right;font-size:15px;letter-spacing:-0.5px;line-height:17px">7</div>
<div class="t" style="left:504px;top:377px;width:40px;text-align:right;font-size:15px;letter-spacing:-0.5px;line-height:17px">7</div>
<div class="t" style="left:546px;top:377px;width:40px;text-align:right;font-size:15px;letter-spacing:-0.5px;line-height:17px">7</div>
<div class="t" style="left:588px;top:377px;width:40px;text-align:right;font-size:15px;letter-spacing:-0.5px;line-height:17px">7</div>
<div class="t" style="left:630px;top:377px;width:40px;text-align:right;font-size:15px;letter-spacing:-0.5px;line-height:17px">7</div>
<div class="t" style="left:672px;top:377px;width:40px;text-align:right;font-size:15px;letter-spacing:-0.5px;line-height:17px">21</div>
<div class="t" style="left:714px;top:377px;width:40px;text-align:right;font-size:15px;letter-spacing:-0.5px;line-height:17px">21</div>
<div class="t" style="left:756px;top:377px;width:40px;text-align:right;font-size:15px;letter-spacing:-0.5px;line-height:17px">21</div>
<div class="t" style="left:798px;top:377px;width:40px;text-align:right;font-size:15px;letter-spacing:-0.5px;line-height:17px">21</div>
<div class="t" style="left:840px;top:377px;width:40px;text-align:right;font-size:15px;letter-spacing:-0.5px;line-height:17px">84</div>
<div class="t" style="left:21px;top:399px;font-size:14px;line-height:17px">실적</div>
<div class="t" style="left:93px;top:399px;font-size:14px;line-height:17px">지표A</div>
<div class="t" style="left:168px;top:399px;width:40px;text-align:right;font-size:15px;letter-spacing:-0.5px;line-height:17px">1</div>
<div class="t" style="left:210px;top:399px;width:40px;text-align:right;font-size:15px;letter-spacing:-0.5px;line-height:17px">1</div>
<div class="t" style="left:252px;top:399px;width:40px;text-align:right;font-size:15px;letter-spacing:-0.5px;line-height:17px">1</div>
<div class="t" style="left:294px;top:399px;width:40px;text-align:right;font-size:15px;letter-spacing:-0.5px;line-height:17px">1</div>
<div class="t" style="left:336px;top:399px;width:40px;text-align:right;font-size:15px;letter-spacing:-0.5px;line-height:17px">1</div>
<div class="t" style="left:378px;top:399px;width:40px;text-align:right;font-size:15px;letter-spacing:-0.5px;line-height:17px">1</div>
<div class="t" style="left:420px;top:399px;width:40px;text-align:right;font-size:15px;letter-spacing:-0.5px;line-height:17px">1</div>
<div class="t" style="left:462px;top:399px;width:40px;text-align:right;font-size:15px;letter-spacing:-0.5px;line-height:17px">1</div>
<div class="t" style="left:504px;top:399px;width:40px;text-align:right;font-size:15px;letter-spacing:-0.5px;line-height:17px">1</div>
<div class="t" style="left:546px;top:399px;width:40px;text-align:right;font-size:15px;letter-spacing:-0.5px;line-height:17px">1</div>
<div class="t" style="left:588px;top:399px;width:40px;text-align:right;font-size:15px;letter-spacing:-0.5px;line-height:17px">1</div>
<div class="t" style="left:630px;top:399px;width:40px;text-align:right;font-size:15px;letter-spacing:-0.5px;line-height:17px">1</div>
<div class="t" style="left:672px;top:399px;width:40px;text-align:right;font-size:15px;letter-spacing:-0.5px;line-height:17px">3</div>
<div class="t" style="left:714px;top:399px;width:40px;text-align:right;font-size:15px;letter-spacing:-0.5px;line-height:17px">3</div>
<div class="t" style="left:756px;top:399px;width:40px;text-align:right;font-size:15px;letter-spacing:-0.5px;line-height:17px">3</div>
<div class="t" style="left:798px;top:399px;width:40px;text-align:right;font-size:15px;letter-spacing:-0.5px;line-height:17px">3</div>
<div class="t" style="left:840px;top:399px;width:40px;text-align:right;font-size:15px;letter-spacing:-0.5px;line-height:17px">12</div>
<div class="t" style="left:21px;top:421px;font-size:14px;line-height:17px">실적</div>
<div class="t" style="left:93px;top:421px;font-size:14px;line-height:17px">지표B</div>
<div class="t" style="left:168px;top:421px;width:40px;text-align:right;font-size:15px;letter-spacing:-0.5px;line-height:17px">2.5</div>
<div class="t" style="left:210px;top:421px;width:40px;text-align:right;font-size:15px;letter-spacing:-0.5px;line-height:17px">2.5</div>
<div class="t" style="left:252px;top:421px;width:40px;text-align:right;font-size:15px;letter-spacing:-0.5px;line-height:17px">2.5</div>
<div class="t" style="left:294px;top:421px;width:40px;text-align:right;font-size:15px;letter-spacing:-0.5px;line-height:17px">2.5</div>
<div class="t" style="left:336px;top:421px;width:40px;text-align:right;font-size:15px;letter-spacing:-0.5px;line-height:17px">2.5</div>
<div class="t" style="left:378px;top:421px;width:40px;text-align:right;font-size:15px;letter-spacing:-0.5px;line-height:17px">2.5</div>
<div class="t" style="left:420px;top:421px;width:40px;text-align:right;font-size:15px;letter-spacing:-0.5px;line-height:17px">2.5</div>
<div class="t" style="left:462px;top:421px;width:40px;text-align:right;font-size:15px;letter-spacing:-0.5px;line-height:17px">2.5</div>
<div class="t" style="left:504px;top:421px;width:40px;text-align:right;font-size:15px;letter-spacing:-0.5px;line-height:17px">2.5</div>
<div class="t" style="left:546px;top:421px;width:40px;text-align:right;font-size:15px;letter-spacing:-0.5px;line-height:17px">2.5</div>
<div class="t" style="left:588px;top:421px;width:40px;text-align:right;font-size:15px;letter-spacing:-0.5px;line-height:17px">2.5</div>
<div class="t" style="left:630px;top:421px;width:40px;text-align:right;font-size:15px;letter-spacing:-0.5px;line-height:17px">2.5</div>
<div class="t" style="left:672px;top:421px;width:40px;text-align:right;font-size:15px;letter-spacing:-0.5px;line-height:17px">7.5</div>
<div class="t" style="left:714px;top:421px;width:40px;text-align:right;font-size:15px;letter-spacing:-0.5px;line-height:17px">7.5</div>
<div class="t" style="left:756px;top:421px;width:40px;text-align:right;font-size:15px;letter-spacing:-0.5px;line-height:17px">7.5</div>
<div class="t" style="left:798px;top:421px;width:40px;text-align:right;font-size:15px;letter-spacing:-0.5px;line-height:17px">7.5</div>
<div class="t" style="left:840px;top:421px;width:40px;text-align:right;font-size:15px;letter-spacing:-0.5px;line-height:17px">30</div>
<div class="t" style="left:21px;top:443px;font-size:14px;line-height:17px">실적</div>
<div class="t" style="left:93px;top:443px;font-size:14px;line-height:17px">지표C</div>
<div class="t" style="left:168px;top:443px;width:40px;text-align:right;font-size:15px;letter-spacing:-0.5px;line-height:17px">0.2</div>
<div class="t" style="left:210px;top:443px;width:40px;text-align:right;font-size:15px;letter-spacing:-0.5px;line-height:17px">0.2</div>
<div class="t" style="left:252px;top:443px;width:40px;text-align:right;font-size:15px;letter-spacing:-0.5px;line-height:17px">0.2</div>
<div class="t" style="left:294px;top:443px;width:40px;text-align:right;font-size:15px;letter-spacing:-0.5px;line-height:17px">0.2</div>
<div class="t" style="left:336px;top:443px;width:40px;text-align:right;font-size:15px;letter-spacing:-0.5px;line-height:17px">0.2</div>
<div class="t" style="left:378px;top:443px;width:40px;text-align:right;font-size:15px;letter-spacing:-0.5px;line-height:17px">0.2</div>
<div class="t" style="left:420px;top:443px;width:40px;text-align:right;font-size:15px;letter-spacing:-0.5px;line-height:17px">0.2</div>
<div class="t" style="left:462px;top:443px;width:40px;text-align:right;font-size:15px;letter-spacing:-0.5px;line-height:17px">0.2</div>
<div class="t" style="left:504px;top:443px;width:40px;text-align:right;font-size:15px;letter-spacing:-0.5px;line-height:17px">0.2</div>
<div class="t" style="left:546px;top:443px;width:40px;text-align:right;font-size:15px;letter-spacing:-0.5px;line-height:17px">0.2</div>
<div class="t" style="left:588px;top:443px;width:40px;text-align:right;font-size:15px;letter-spacing:-0.5px;line-height:17px">0.2</div>
<div class="t" style="left:630px;top:443px;width:40px;text-align:right;font-size:15px;letter-spacing:-0.5px;line-height:17px">0.2</div>
<div class="t" style="left:672px;top:443px;width:40px;text-align:right;font-size:15px;letter-spacing:-0.5px;line-height:17px">0.6</div>
<div class="t" style="left:714px;top:443px;width:40px;text-align:right;font-size:15px;letter-spacing:-0.5px;line-height:17px">0.6</div>
<div class="t" style="left:756px;top:443px;width:40px;text-align:right;font-size:15px;letter-spacing:-0.5px;line-height:17px">0.6</div>
<div class="t" style="left:798px;top:443px;width:40px;text-align:right;font-size:15px;letter-spacing:-0.5px;line-height:17px">0.6</div>
<div class="t" style="left:840px;top:443px;width:40px;text-align:right;font-size:15px;letter-spacing:-0.5px;line-height:17px">2.4</div>
<div class="t" style="left:21px;top:465px;font-size:14px;line-height:17px">실적</div>
<div class="t" style="left:93px;top:465px;font-size:14px;line-height:17px">매출</div>
<div class="t" style="left:168px;top:465px;width:40px;text-align:right;font-size:15px;letter-spacing:-0.5px;line-height:17px">100</div>
<div class="t" style="left:210px;top:465px;width:40px;text-align:right;font-size:15px;letter-spacing:-0.5px;line-height:17px">100</div>
<div class="t" style="left:252px;top:465px;width:40px;text-align:right;font-size:15px;letter-spacing:-0.5px;line-height:17px">100</div>
<div class="t" style="left:294px;top:465px;width:40px;text-align:right;font-size:15px;letter-spacing:-0.5px;line-height:17px">100</div>
<div class="t" style="left:336px;top:465px;width:40px;text-align:right;font-size:15px;letter-spacing:-0.5px;line-height:17px">100</div>
<div class="t" style="left:378px;top:465px;width:40px;text-align:right;font-size:15px;letter-spacing:-0.5px;line-height:17px">100</div>
<div class="t" style="left:420px;top:465px;width:40px;text-align:right;font-size:15px;letter-spacing:-0.5px;line-height:17px">100</div>
<div class="t" style="left:462px;top:465px;width:40px;text-align:right;font-size:15px;letter-spacing:-0.5px;line-height:17px">100</div>
<div class="t" style="left:504px;top:465px;width:40px;text-align:right;font-size:15px;letter-spacing:-0.5px;line-height:17px">100</div>
<div class="t" style="left:546px;top:465px;width:40px;text-align:right;font-size:15px;letter-spacing:-0.5px;line-height:17px">100</div>
<div class="t" style="left:588px;top:465px;width:40px;text-align:right;font-size:15px;letter-spacing:-0.5px;line-height:17px">100</div>
<div class="t" style="left:630px;top:465px;width:40px;text-align:right;font-size:15px;letter-spacing:-0.5px;line-height:17px">100</div>
<div class="t" style="left:672px;top:465px;width:40px;text-align:right;font-size:15px;letter-spacing:-0.5px;line-height:17px">300</div>
<div class="t" style="left:714px;top:465px;width:40px;text-align:right;font-size:15px;letter-spacing:-0.5px;line-height:17px">300</div>
<div class="t" style="left:756px;top:465px;width:40px;text-align:right;font-size:15px;letter-spacing:-0.5px;line-height:17px">300</div>
<div class="t" style="left:798px;top:465px;width:40px;text-align:right;font-size:15px;letter-spacing:-0.5px;line-height:17px">300</div>
<div class="t" style="left:840px;top:465px;width:40px;text-align:right;font-size:15px;letter-spacing:-0.5px;line-height:17px">1200</div>
<div class="t" style="left:21px;top:487px;font-size:14px;line-height:17px">실적</div>
<div class="t" style="left:93px;top:487px;font-size:14px;line-height:17px">매출원가</div>
<div class="t" style="left:168px;top:487px;width:40px;text-align:right;font-size:15px;letter-spacing:-0.5px;line-height:17px">90</div>
<div class="t" style="left:210px;top:487px;width:40px;text-align:right;font-size:15px;letter-spacing:-0.5px;line-height:17px">90</div>
<div class="t" style="left:252px;top:487px;width:40px;text-align:right;font-size:15px;letter-spacing:-0.5px;line-height:17px">90</div>
<div class="t" style="left:294px;top:487px;width:40px;text-align:right;font-size:15px;letter-spacing:-0.5px;line-height:17px">90</div>
<div class="t" style="left:336px;top:487px;width:40px;text-align:right;font-size:15px;letter-spacing:-0.5px;line-height:17px">90</div>
<div class="t" style="left:378px;top:487px;width:40px;text-align:right;font-size:15px;letter-spacing:-0.5px;line-height:17px">90</div>
<div class="t" style="left:420px;top:487px;width:40px;text-align:right;font-size:15px;letter-spacing:-0.5px;line-height:17px">90</div>
<div class="t" style="left:462px;top:487px;width:40px;text-align:right;font-size:15px;letter-spacing:-0.5px;line-height:17px">90</div>
<div class="t" style="left:504px;top:487px;width:40px;text-align:right;font-size:15px;letter-spacing:-0.5px;line-height:17px">90</div>
<div class="t" style="left:546px;top:487px;width:40px;text-align:right;font-size:15px;letter-spacing:-0.5px;line-height:17px">90</div>
<div class="t" style="left:588px;top:487px;width:40px;text-align:right;font-size:15px;letter-spacing:-0.5px;line-height:17px">90</div>
<div class="t" style="left:630px;top:487px;width:40px;text-align:right;font-size:15px;letter-spacing:-0.5px;line-height:17px">90</div>
<div class="t" style="left:672px;top:487px;width:40px;text-align:right;font-size:15px;letter-spacing:-0.5px;line-height:17px">270</div>
<div class="t" style="left:714px;top:487px;width:40px;text-align:right;font-size:15px;letter-spacing:-0.5px;line-height:17px">270</div>
<div class="t" style="left:756px;top:487px;width:40px;text-align:right;font-size:15px;letter-spacing:-0.5px;line-height:17px">270</div>
<div class="t" style="left:798px;top:487px;width:40px;text-align:right;font-size:15px;letter-spacing:-0.5px;line-height:17px">270</div>
<div class="t" style="left:840px;top:487px;width:40px;text-align:right;font-size:15px;letter-spacing:-0.5px;line-height:17px">1080</div>
<div class="t" style="left:21px;top:509px;font-size:14px;line-height:17px">실적</div>
<div class="t" style="left:93px;top:509px;font-size:14px;line-height:17px">매출총이익</div>
<div class="t" style="left:168px;top:509px;width:40px;text-align:right;font-size:15px;letter-spacing:-0.5px;line-height:17px">10</div>
<div class="t" style="left:210px;top:509px;width:40px;text-align:right;font-size:15px;letter-spacing:-0.5px;line-height:17px">10</div>
<div class="t" style="left:252px;top:509px;width:40px;text-align:right;font-size:15px;letter-spacing:-0.5px;line-height:17px">10</div>
<div class="t" style="left:294px;top:509px;width:40px;text-align:right;font-size:15px;letter-spacing:-0.5px;line-height:17px">10</div>
<div class="t" style="left:336px;top:509px;width:40px;text-align:right;font-size:15px;letter-spacing:-0.5px;line-height:17px">10</div>
<div class="t" style="left:378px;top:509px;width:40px;text-align:right;font-size:15px;letter-spacing:-0.5px;line-height:17px">10</div>
<div class="t" style="left:420px;top:509px;width:40px;text-align:right;font-size:15px;letter-spacing:-0.5px;line-height:17px">10</div>
<div class="t" style="left:462px;top:509px;width:40px;text-align:right;font-size:15px;letter-spacing:-0.5px;line-height:17px">10</div>
<div class="t" style="left:504px;top:509px;width:40px;text-align:right;font-size:15px;letter-spacing:-0.5px;line-height:17px">10</div>
<div class="t" style="left:546px;top:509px;width:40px;text-align:right;font-size:15px;letter-spacing:-0.5px;line-height:17px">10</div>
<div class="t" style="left:588px;top:509px;width:40px;text-align:right;font-size:15px;letter-spacing:-0.5px;line-height:17px">10</div>
<div class="t" style="left:630px;top:509px;width:40px;text-align:right;font-size:15px;letter-spacing:-0.5px;line-height:17px">10</div>
<div class="t" style="left:672px;top:509px;width:40px;text-align:right;font-size:15px;letter-spacing:-0.5px;line-height:17px">30</div>
<div class="t" style="left:714px;top:509px;width:40px;text-align:right;font-size:15px;letter-spacing:-0.5px;line-height:17px">30</div>
<div class="t" style="left:756px;top:509px;width:40px;text-align:right;font-size:15px;letter-spacing:-0.5px;line-height:17px">30</div>
<div class="t" style="left:798px;top:509px;width:40px;text-align:right;font-size:15px;letter-spacing:-0.5px;line-height:17px">30</div>
<div class="t" style="left:840px;top:509px;width:40px;text-align:right;font-size:15px;letter-spacing:-0.5px;line-height:17px">120</div>
<div class="t" style="left:21px;top:531px;font-size:14px;line-height:17px">실적</div>
<div class="t" style="left:93px;top:531px;font-size:14px;line-height:17px">판관비</div>
<div class="t" style="left:168px;top:531px;width:40px;text-align:right;font-size:15px;letter-spacing:-0.5px;line-height:17px">3</div>
<div class="t" style="left:210px;top:531px;width:40px;text-align:right;font-size:15px;letter-spacing:-0.5px;line-height:17px">3</div>
<div class="t" style="left:252px;top:531px;width:40px;text-align:right;font-size:15px;letter-spacing:-0.5px;line-height:17px">3</div>
<div class="t" style="left:294px;top:531px;width:40px;text-align:right;font-size:15px;letter-spacing:-0.5px;line-height:17px">3</div>
<div class="t" style="left:336px;top:531px;width:40px;text-align:right;font-size:15px;letter-spacing:-0.5px;line-height:17px">3</div>
<div class="t" style="left:378px;top:531px;width:40px;text-align:right;font-size:15px;letter-spacing:-0.5px;line-height:17px">3</div>
<div class="t" style="left:420px;top:531px;width:40px;text-align:right;font-size:15px;letter-spacing:-0.5px;line-height:17px">3</div>
<div class="t" style="left:462px;top:531px;width:40px;text-align:right;font-size:15px;letter-spacing:-0.5px;line-height:17px">3</div>
<div class="t" style="left:504px;top:531px;width:40px;text-align:right;font-size:15px;letter-spacing:-0.5px;line-height:17px">3</div>
<div class="t" style="left:546px;top:531px;width:40px;text-align:right;font-size:15px;letter-spacing:-0.5px;line-height:17px">3</div>
<div class="t" style="left:588px;top:531px;width:40px;text-align:right;font-size:15px;letter-spacing:-0.5px;line-height:17px">3</div>
<div class="t" style="left:630px;top:531px;width:40px;text-align:right;font-size:15px;letter-spacing:-0.5px;line-height:17px">3</div>
<div class="t" style="left:672px;top:531px;width:40px;text-align:right;font-size:15px;letter-spacing:-0.5px;line-height:17px">9</div>
<div class="t" style="left:714px;top:531px;width:40px;text-align:right;font-size:15px;letter-spacing:-0.5px;line-height:17px">9</div>
<div class="t" style="left:756px;top:531px;width:40px;text-align:right;font-size:15px;letter-spacing:-0.5px;line-height:17px">9</div>
<div class="t" style="left:798px;top:531px;width:40px;text-align:right;font-size:15px;letter-spacing:-0.5px;line-height:17px">9</div>
<div class="t" style="left:840px;top:531px;width:40px;text-align:right;font-size:15px;letter-spacing:-0.5px;line-height:17px">36</div>
<div class="t" style="left:21px;top:553px;font-size:14px;line-height:17px">실적</div>
<div class="t" style="left:93px;top:553px;font-size:14px;line-height:17px">영업이익</div>
<div class="t" style="left:168px;top:553px;width:40px;text-align:right;font-size:15px;letter-spacing:-0.5px;line-height:17px">7</div>
<div class="t" style="left:210px;top:553px;width:40px;text-align:right;font-size:15px;letter-spacing:-0.5px;line-height:17px">7</div>
<div class="t" style="left:252px;top:553px;width:40px;text-align:right;font-size:15px;letter-spacing:-0.5px;line-height:17px">7</div>
<div class="t" style="left:294px;top:553px;width:40px;text-align:right;font-size:15px;letter-spacing:-0.5px;line-height:17px">7</div>
<div class="t" style="left:336px;top:553px;width:40px;text-align:right;font-size:15px;letter-spacing:-0.5px;line-height:17px">7</div>
<div class="t" style="left:378px;top:553px;width:40px;text-align:right;font-size:15px;letter-spacing:-0.5px;line-height:17px">7</div>
<div class="t" style="left:420px;top:553px;width:40px;text-align:right;font-size:15px;letter-spacing:-0.5px;line-height:17px">7</div>
<div class="t" style="left:462px;top:553px;width:40px;text-align:right;font-size:15px;letter-spacing:-0.5px;line-height:17px">7</div>
<div class="t" style="left:504px;top:553px;width:40px;text-align:right;font-size:15px;letter-spacing:-0.5px;line-height:17px">7</div>
<div class="t" style="left:546px;top:553px;width:40px;text-align:right;font-size:15px;letter-spacing:-0.5px;line-height:17px">7</div>
<div class="t" style="left:588px;top:553px;width:40px;text-align:right;font-size:15px;letter-spacing:-0.5px;line-height:17px">7</div>
<div class="t" style="left:630px;top:553px;width:40px;text-align:right;font-size:15px;letter-spacing:-0.5px;line-height:17px">7</div>
<div class="t" style="left:672px;top:553px;width:40px;text-align:right;font-size:15px;letter-spacing:-0.5px;line-height:17px">21</div>
<div class="t" style="left:714px;top:553px;width:40px;text-align:right;font-size:15px;letter-spacing:-0.5px;line-height:17px">21</div>
<div class="t" style="left:756px;top:553px;width:40px;text-align:right;font-size:15px;letter-spacing:-0.5px;line-height:17px">21</div>
<div class="t" style="left:798px;top:553px;width:40px;text-align:right;font-size:15px;letter-spacing:-0.5px;line-height:17px">21</div>
<div class="t" style="left:840px;top:553px;width:40px;text-align:right;font-size:15px;letter-spacing:-0.5px;line-height:17px">84</div>
<div style="left:17px;top:22px;width:1px;height:551px;background:#d4d4d4"></div>
<div style="left:89px;top:22px;width:1px;height:551px;background:#d4d4d4"></div>
<div style="left:168px;top:22px;width:1px;height:551px;background:#d4d4d4"></div>
<div style="left:210px;top:22px;width:1px;height:551px;background:#d4d4d4"></div>
<div style="left:252px;top:22px;width:1px;height:551px;background:#d4d4d4"></div>
<div style="left:294px;top:22px;width:1px;height:551px;background:#d4d4d4"></div>
<div style="left:336px;top:22px;width:1px;height:551px;background:#d4d4d4"></div>
<div style="left:378px;top:22px;width:1px;height:551px;background:#d4d4d4"></div>
<div style="left:420px;top:22px;width:1px;height:551px;background:#d4d4d4"></div>
<div style="left:462px;top:22px;width:1px;height:551px;background:#d4d4d4"></div>
<div style="left:504px;top:22px;width:1px;height:551px;background:#d4d4d4"></div>
<div style="left:546px;top:22px;width:1px;height:551px;background:#d4d4d4"></div>
<div style="left:588px;top:22px;width:1px;height:551px;background:#d4d4d4"></div>
<div style="left:630px;top:22px;width:1px;height:551px;background:#d4d4d4"></div>
<div style="left:672px;top:22px;width:1px;height:551px;background:#d4d4d4"></div>
<div style="left:714px;top:22px;width:1px;height:551px;background:#d4d4d4"></div>
<div style="left:756px;top:22px;width:1px;height:551px;background:#d4d4d4"></div>
<div style="left:798px;top:22px;width:1px;height:551px;background:#d4d4d4"></div>
<div style="left:840px;top:22px;width:1px;height:551px;background:#d4d4d4"></div>
<div style="left:882px;top:22px;width:1px;height:551px;background:#d4d4d4"></div>
<div style="left:17px;top:22px;width:866px;height:1px;background:#d4d4d4"></div>
<div style="left:17px;top:44px;width:866px;height:1px;background:#d4d4d4"></div>
<div style="left:17px;top:66px;width:866px;height:1px;background:#d4d4d4"></div>
<div style="left:17px;top:88px;width:866px;height:1px;background:#d4d4d4"></div>
<div style="left:17px;top:110px;width:866px;height:1px;background:#d4d4d4"></div>
<div style="left:17px;top:132px;width:866px;height:1px;background:#d4d4d4"></div>
<div style="left:17px;top:154px;width:866px;height:1px;background:#d4d4d4"></div>
<div style="left:17px;top:176px;width:866px;height:1px;background:#d4d4d4"></div>
<div style="left:17px;top:198px;width:866px;height:1px;background:#d4d4d4"></div>
<div style="left:17px;top:220px;width:866px;height:1px;background:#d4d4d4"></div>
<div style="left:17px;top:242px;width:866px;height:1px;background:#d4d4d4"></div>
<div style="left:17px;top:264px;width:866px;height:1px;background:#d4d4d4"></div>
<div style="left:17px;top:286px;width:866px;height:1px;background:#d4d4d4"></div>
<div style="left:17px;top:308px;width:866px;height:1px;background:#d4d4d4"></div>
<div style="left:17px;top:330px;width:866px;height:1px;background:#d4d4d4"></div>
<div style="left:17px;top:352px;width:866px;height:1px;background:#d4d4d4"></div>
<div style="left:17px;top:374px;width:866px;height:1px;background:#d4d4d4"></div>
<div style="left:17px;top:396px;width:866px;height:1px;background:#d4d4d4"></div>
<div style="left:17px;top:418px;width:866px;height:1px;background:#d4d4d4"></div>
<div style="left:17px;top:440px;width:866px;height:1px;background:#d4d4d4"></div>
<div style="left:17px;top:462px;width:866px;height:1px;background:#d4d4d4"></div>
<div style="left:17px;top:484px;width:866px;height:1px;background:#d4d4d4"></div>
<div style="left:17px;top:506px;width:866px;height:1px;background:#d4d4d4"></div>
<div style="left:17px;top:528px;width:866px;height:1px;background:#d4d4d4"></div>
<div style="left:17px;top:550px;width:866px;height:1px;background:#d4d4d4"></div>
<div style="left:17px;top:572px;width:866px;height:1px;background:#d4d4d4"></div>
<div style="left:908px;top:22px;width:234px;height:44px;background:#ddebf7"></div>
<div style="left:908px;top:65px;width:234px;height:2px;background:#a6c9e8"></div>
<div class="t" style="left:912px;top:25px;font-weight:bold;font-size:14px;line-height:17px">합계 : 9</div>
<div class="t" style="left:1007px;top:25px;font-weight:bold;font-size:14px;line-height:17px">열 레이블</div>
<div style="left:1080px;top:26px;width:17px;height:17px;background:#f3f3f3;border:1px solid #999"></div>
<svg style="left:1083px;top:30px" width="12" height="10" viewBox="0 0 12 10"><path d="M3 0.5 H12 L8.8 4 V8.5 H6.2 V4 Z" fill="#555"/><path d="M0 6 H4.5 L2.25 9 Z" fill="#666"/></svg>
<div class="t" style="left:912px;top:47px;font-weight:bold;font-size:14px;line-height:17px">행 레이블</div>
<div style="left:985px;top:48px;width:17px;height:16px;background:#f0f0f0;border:1px solid #999"></div>
<svg style="left:990px;top:55px" width="7" height="4" viewBox="0 0 7 4"><path d="M0 0 H7 L3.5 4 Z" fill="#333"/></svg>
<div class="t" style="left:1007px;top:47px;font-weight:bold;font-size:14px;line-height:17px">계획</div>
<div class="t" style="left:1098px;top:47px;width:33px;text-align:right;font-weight:bold;font-size:14px;line-height:17px">실적</div>
<div class="t" style="left:912px;top:70px;font-size:14px;line-height:17px">매출</div>
<div class="t" style="left:1003px;top:69px;width:92px;text-align:right;font-size:15px;letter-spacing:-0.5px;line-height:17px">100</div>
<div class="t" style="left:1098px;top:69px;width:40px;text-align:right;font-size:15px;letter-spacing:-0.5px;line-height:17px">100</div>
<div class="t" style="left:912px;top:92px;font-size:14px;line-height:17px">매출원가</div>
<div class="t" style="left:1003px;top:91px;width:92px;text-align:right;font-size:15px;letter-spacing:-0.5px;line-height:17px">90</div>
<div class="t" style="left:1098px;top:91px;width:40px;text-align:right;font-size:15px;letter-spacing:-0.5px;line-height:17px">90</div>
<div class="t" style="left:912px;top:114px;font-size:14px;line-height:17px">매출총이익</div>
<div class="t" style="left:1003px;top:113px;width:92px;text-align:right;font-size:15px;letter-spacing:-0.5px;line-height:17px">10</div>
<div class="t" style="left:1098px;top:113px;width:40px;text-align:right;font-size:15px;letter-spacing:-0.5px;line-height:17px">10</div>
<div class="t" style="left:912px;top:136px;font-size:14px;line-height:17px">영업이익</div>
<div class="t" style="left:1003px;top:135px;width:92px;text-align:right;font-size:15px;letter-spacing:-0.5px;line-height:17px">7</div>
<div class="t" style="left:1098px;top:135px;width:40px;text-align:right;font-size:15px;letter-spacing:-0.5px;line-height:17px">7</div>
<div class="t" style="left:912px;top:158px;font-size:14px;line-height:17px">지표A</div>
<div class="t" style="left:1003px;top:157px;width:92px;text-align:right;font-size:15px;letter-spacing:-0.5px;line-height:17px">1</div>
<div class="t" style="left:1098px;top:157px;width:40px;text-align:right;font-size:15px;letter-spacing:-0.5px;line-height:17px">1</div>
<div class="t" style="left:912px;top:180px;font-size:14px;line-height:17px">지표B</div>
<div class="t" style="left:1003px;top:179px;width:92px;text-align:right;font-size:15px;letter-spacing:-0.5px;line-height:17px">2.5</div>
<div class="t" style="left:1098px;top:179px;width:40px;text-align:right;font-size:15px;letter-spacing:-0.5px;line-height:17px">2.5</div>
<div class="t" style="left:912px;top:202px;font-size:14px;line-height:17px">지표C</div>
<div class="t" style="left:1003px;top:201px;width:92px;text-align:right;font-size:15px;letter-spacing:-0.5px;line-height:17px">0.2</div>
<div class="t" style="left:1098px;top:201px;width:40px;text-align:right;font-size:15px;letter-spacing:-0.5px;line-height:17px">0.2</div>
<div class="t" style="left:912px;top:224px;font-size:14px;line-height:17px">판관비</div>
<div class="t" style="left:1003px;top:223px;width:92px;text-align:right;font-size:15px;letter-spacing:-0.5px;line-height:17px">3</div>
<div class="t" style="left:1098px;top:223px;width:40px;text-align:right;font-size:15px;letter-spacing:-0.5px;line-height:17px">3</div>
<div style="left:917px;top:299px;width:192px;height:295px;border:1px solid #5b9bd5;background:#fff"></div>
<div class="t" style="left:927px;top:305px;font-weight:bold;font-size:15px;line-height:18px">구분</div>
<svg style="left:1049px;top:306px" width="18" height="18" viewBox="0 0 18 18"><path d="M1 3 L3.6 5.4 L7 1.5 M1 8.2 L3.6 10.6 L7 6.7 M1 13.2 L3.6 15.6 L7 11.7" fill="none" stroke="#333" stroke-width="1.05"/><g shape-rendering="crispEdges"><path d="M8 4.5 H16 M8 9.5 H16 M8 14.5 H16" stroke="#333" stroke-width="1"/></g></svg>
<svg style="left:1080px;top:306px" width="18" height="18" viewBox="0 0 18 18"><path d="M8.3 17 V10 L1.5 3.5 V1.5 H16.5 V3.5 L11.7 8" fill="none" stroke="#333" stroke-width="1.1"/><path d="M10.5 11 L16 16.5 M16 11 L10.5 16.5" stroke="#e8404a" stroke-width="1.1"/></svg>
<div style="left:926px;top:329px;width:175px;height:1px;background:#5b9bd5"></div>
<div style="left:926px;top:334px;width:174px;height:260px;overflow:hidden">
<div style="left:0;top:0px;width:174px;height:29px;background:#bdd7ee;border:1px solid #9a9a9a;border-radius:3px"></div>
<div class="t" style="left:9px;top:5px;font-size:14.67px;line-height:18px">계획</div>
<div style="left:0;top:32px;width:174px;height:29px;background:#bdd7ee;border:1px solid #9a9a9a;border-radius:3px"></div>
<div class="t" style="left:9px;top:37px;font-size:14.67px;line-height:18px">실적</div>
<div style="left:0;top:64px;width:174px;height:29px;background:#fff;border:1px solid #d0d0d0;border-radius:3px"></div>
<div class="t" style="left:9px;top:69px;font-size:14.67px;line-height:18px">전망</div>
</div>
<div style="left:1127px;top:296px;width:192px;height:295px;border:1px solid #5b9bd5;background:#fff"></div>
<div class="t" style="left:1137px;top:302px;font-weight:bold;font-size:15px;line-height:18px">지표</div>
<svg style="left:1259px;top:303px" width="18" height="18" viewBox="0 0 18 18"><path d="M1 3 L3.6 5.4 L7 1.5 M1 8.2 L3.6 10.6 L7 6.7 M1 13.2 L3.6 15.6 L7 11.7" fill="none" stroke="#333" stroke-width="1.05"/><g shape-rendering="crispEdges"><path d="M8 4.5 H16 M8 9.5 H16 M8 14.5 H16" stroke="#333" stroke-width="1"/></g></svg>
<svg style="left:1290px;top:303px" width="18" height="18" viewBox="0 0 18 18"><path d="M8.3 17 V10 L1.5 3.5 V1.5 H16.5 V3.5 L11.7 8" fill="none" stroke="#a8a8a8" stroke-width="1.1"/><path d="M10.5 11 L16 16.5 M16 11 L10.5 16.5" stroke="#b8b8b8" stroke-width="1.1"/></svg>
<div style="left:1136px;top:326px;width:175px;height:1px;background:#5b9bd5"></div>
<div style="left:1136px;top:331px;width:152px;height:251px;overflow:hidden">
<div style="left:0;top:0px;width:152px;height:29px;background:#bdd7ee;border:1px solid #9a9a9a;border-radius:3px"></div>
<div class="t" style="left:9px;top:5px;font-size:14.67px;line-height:18px">매출</div>
<div style="left:0;top:32px;width:152px;height:29px;background:#bdd7ee;border:1px solid #9a9a9a;border-radius:3px"></div>
<div class="t" style="left:9px;top:37px;font-size:14.67px;line-height:18px">매출원가</div>
<div style="left:0;top:64px;width:152px;height:29px;background:#bdd7ee;border:1px solid #9a9a9a;border-radius:3px"></div>
<div class="t" style="left:9px;top:69px;font-size:14.67px;line-height:18px">매출총이익</div>
<div style="left:0;top:96px;width:152px;height:29px;background:#bdd7ee;border:1px solid #9a9a9a;border-radius:3px"></div>
<div class="t" style="left:9px;top:101px;font-size:14.67px;line-height:18px">영업이익</div>
<div style="left:0;top:128px;width:152px;height:29px;background:#bdd7ee;border:1px solid #9a9a9a;border-radius:3px"></div>
<div class="t" style="left:9px;top:133px;font-size:14.67px;line-height:18px">지표A</div>
<div style="left:0;top:160px;width:152px;height:29px;background:#bdd7ee;border:1px solid #9a9a9a;border-radius:3px"></div>
<div class="t" style="left:9px;top:165px;font-size:14.67px;line-height:18px">지표B</div>
<div style="left:0;top:192px;width:152px;height:29px;background:#bdd7ee;border:1px solid #9a9a9a;border-radius:3px"></div>
<div class="t" style="left:9px;top:197px;font-size:14.67px;line-height:18px">지표C</div>
<div style="left:0;top:224px;width:152px;height:29px;background:#bdd7ee;border:1px solid #9a9a9a;border-radius:3px"></div>
<div class="t" style="left:9px;top:229px;font-size:14.67px;line-height:18px">판관비</div>
</div>
<div style="left:1293px;top:331px;width:17px;height:251px;background:#f0f0f0"></div>
<div style="left:1294px;top:349px;width:15px;height:188px;background:#c8c8c8"></div>
<svg style="left:1297px;top:338px" width="9" height="6" viewBox="0 0 9 6"><path d="M1 5 L4.5 1.5 L8 5" fill="none" stroke="#444" stroke-width="1.6"/></svg>
<svg style="left:1297px;top:571px" width="9" height="6" viewBox="0 0 9 6"><path d="M1 1 L4.5 4.5 L8 1" fill="none" stroke="#444" stroke-width="1.6"/></svg>
<div style="left:1333px;top:293px;width:192px;height:295px;border:1px solid #5b9bd5;background:#fff"></div>
<div class="t" style="left:1343px;top:299px;font-weight:bold;font-size:15px;line-height:18px">연간</div>
<svg style="left:1465px;top:300px" width="18" height="18" viewBox="0 0 18 18"><path d="M1 3 L3.6 5.4 L7 1.5 M1 8.2 L3.6 10.6 L7 6.7 M1 13.2 L3.6 15.6 L7 11.7" fill="none" stroke="#333" stroke-width="1.05"/><g shape-rendering="crispEdges"><path d="M8 4.5 H16 M8 9.5 H16 M8 14.5 H16" stroke="#333" stroke-width="1"/></g></svg>
<svg style="left:1496px;top:300px" width="18" height="18" viewBox="0 0 18 18"><path d="M8.3 17 V10 L1.5 3.5 V1.5 H16.5 V3.5 L11.7 8" fill="none" stroke="#a8a8a8" stroke-width="1.1"/><path d="M10.5 11 L16 16.5 M16 11 L10.5 16.5" stroke="#b8b8b8" stroke-width="1.1"/></svg>
<div style="left:1342px;top:323px;width:175px;height:1px;background:#5b9bd5"></div>
<div style="left:1342px;top:328px;width:152px;height:251px;overflow:hidden">
<div style="left:0;top:0px;width:152px;height:29px;background:#bdd7ee;border:1px solid #9a9a9a;border-radius:3px"></div>
<div class="t" style="left:9px;top:5px;font-size:14.67px;line-height:18px">2.4</div>
<div style="left:0;top:32px;width:152px;height:29px;background:#bdd7ee;border:1px solid #9a9a9a;border-radius:3px"></div>
<div class="t" style="left:9px;top:37px;font-size:14.67px;line-height:18px">12</div>
<div style="left:0;top:64px;width:152px;height:29px;background:#bdd7ee;border:1px solid #9a9a9a;border-radius:3px"></div>
<div class="t" style="left:9px;top:69px;font-size:14.67px;line-height:18px">30</div>
<div style="left:0;top:96px;width:152px;height:29px;background:#bdd7ee;border:1px solid #9a9a9a;border-radius:3px"></div>
<div class="t" style="left:9px;top:101px;font-size:14.67px;line-height:18px">36</div>
<div style="left:0;top:128px;width:152px;height:29px;background:#bdd7ee;border:1px solid #9a9a9a;border-radius:3px"></div>
<div class="t" style="left:9px;top:133px;font-size:14.67px;line-height:18px">84</div>
<div style="left:0;top:160px;width:152px;height:29px;background:#bdd7ee;border:1px solid #9a9a9a;border-radius:3px"></div>
<div class="t" style="left:9px;top:165px;font-size:14.67px;line-height:18px">120</div>
<div style="left:0;top:192px;width:152px;height:29px;background:#bdd7ee;border:1px solid #9a9a9a;border-radius:3px"></div>
<div class="t" style="left:9px;top:197px;font-size:14.67px;line-height:18px">1080</div>
<div style="left:0;top:224px;width:152px;height:29px;background:#bdd7ee;border:1px solid #9a9a9a;border-radius:3px"></div>
<div class="t" style="left:9px;top:229px;font-size:14.67px;line-height:18px">1200</div>
</div>
<div style="left:1499px;top:328px;width:17px;height:251px;background:#f0f0f0"></div>
<div style="left:1500px;top:346px;width:15px;height:188px;background:#c8c8c8"></div>
<svg style="left:1503px;top:335px" width="9" height="6" viewBox="0 0 9 6"><path d="M1 5 L4.5 1.5 L8 5" fill="none" stroke="#444" stroke-width="1.6"/></svg>
<svg style="left:1503px;top:568px" width="9" height="6" viewBox="0 0 9 6"><path d="M1 1 L4.5 4.5 L8 1" fill="none" stroke="#444" stroke-width="1.6"/></svg>
</div>
<div style="left:1551px;top:171px;width:17px;height:781px;background:#161616;border-radius:8px"></div>
<svg style="left:1555px;top:176px;" width="10" height="8" viewBox="0 0 10 8"><path d="M5 0.5 L9.5 7.5 H0.5 Z" fill="#9a9a9a"/></svg>
<div style="left:1555px;top:188px;width:9px;height:733px;background:#9a9a9a;border-radius:5px"></div>
<svg style="left:1555px;top:940px;" width="10" height="8" viewBox="0 0 10 8"><path d="M0.5 0.5 H9.5 L5 7.5 Z" fill="#9a9a9a"/></svg>
<div style="left:0px;top:949px;width:1570px;height:32px;background:#0a0a0a"></div>
<div style="left:116px;top:949px;width:61px;height:28px;background:linear-gradient(#fff,#eef5ea);border-radius:0 0 7px 7px"></div>
<div style="left:111px;top:949px;width:5px;height:5px;background:radial-gradient(circle at 0 100%,#0a0a0a 4.5px,#fff 5px)"></div>
<div style="left:177px;top:949px;width:5px;height:5px;background:radial-gradient(circle at 100% 100%,#0a0a0a 4.5px,#fff 5px)"></div>
<div class="t h" style="left:126px;top:955px;font-size:13.5px;line-height:17px;color:#262626">Sheet1</div>
<div style="left:124px;top:972px;width:45px;height:2px;background:#107c41"></div>
<svg style="left:29px;top:960px;" width="7" height="10" viewBox="0 0 7 10"><path d="M6 0.5 L1 5 L6 9.5" fill="none" stroke="#aaa" stroke-width="1.1"/></svg>
<svg style="left:61px;top:960px;" width="7" height="10" viewBox="0 0 7 10"><path d="M1 0.5 L6 5 L1 9.5" fill="none" stroke="#aaa" stroke-width="1.1"/></svg>
<div style="left:181px;top:957px;width:1px;height:17px;background:#8a8a8a"></div>
<svg style="left:224px;top:959px;" width="12" height="12" viewBox="0 0 12 12"><path d="M6 0 V12 M0 6 H12" stroke="#eee" stroke-width="1.2"/></svg>
<svg style="left:943px;top:961px;" width="3" height="11" viewBox="0 0 3 11"><rect x="0" y="0" width="2.5" height="2.5" fill="#fff"/><rect x="0" y="4" width="2.5" height="2.5" fill="#fff"/><rect x="0" y="8" width="2.5" height="2.5" fill="#fff"/></svg>
<div style="left:961px;top:956px;width:590px;height:17px;background:#161616;border-radius:9px"></div>
<svg style="left:966px;top:960px;" width="7" height="9" viewBox="0 0 7 9"><path d="M0.5 4.5 L6.5 0.5 V8.5 Z" fill="#9a9a9a"/></svg>
<div style="left:978px;top:960px;width:510px;height:9px;background:#9a9a9a;border-radius:5px"></div>
<svg style="left:1539px;top:960px;" width="7" height="9" viewBox="0 0 7 9"><path d="M6.5 4.5 L0.5 0.5 V8.5 Z" fill="#9a9a9a"/></svg>
<div style="left:1570px;top:171px;width:1px;height:808px;background:#3c3c3c"></div>
<div class="t" style="left:1584px;top:185px;font-size:15px;line-height:18px;-webkit-text-stroke:0.5px #fff">피벗 테이블 필드</div>
<svg style="left:1856px;top:191px;" width="14" height="8" viewBox="0 0 14 8"><path d="M0.5 0.5 L7 7 L13.5 0.5" fill="none" stroke="#ddd" stroke-width="1.2"/></svg>
<svg style="left:1890px;top:188px;" width="13" height="13" viewBox="0 0 13 13"><path d="M0.5 0.5 L12.5 12.5 M12.5 0.5 L0.5 12.5" stroke="#ddd" stroke-width="1.2"/></svg>
<div class="t" style="left:1584px;top:220px;font-size:12px;line-height:15px">보고서에 추가할 필드 선택:</div>
<div style="left:1860px;top:213px;width:50px;height:29px;border:1px solid #4a4a4a;background:#1e1e1e"></div>
<svg style="left:1869px;top:219px;" width="16" height="16" viewBox="0 0 16 16"><circle cx="8" cy="8" r="2.5" fill="none" stroke="#ddd" stroke-width="1.1"/><path d="M8 1 L9.5 3 L12 2.3 L12.5 4.8 L15 5.8 L13.8 8 L15 10.2 L12.5 11.2 L12 13.7 L9.5 13 L8 15 L6.5 13 L4 13.7 L3.5 11.2 L1 10.2 L2.2 8 L1 5.8 L3.5 4.8 L4 2.3 L6.5 3 Z" fill="none" stroke="#ddd" stroke-width="1.1"/></svg>
<svg style="left:1892px;top:226px;" width="6" height="4.0" viewBox="0 0 6 4.0"><path d="M0.5 0.5 L3.0 3.0 L5.5 0.5" fill="none" stroke="#ddd" stroke-width="1.3"/></svg>
<div style="left:1583px;top:256px;width:330px;height:24px;border:1px solid #5a5a5a;background:#2a2a2a"></div>
<div class="t" style="left:1590px;top:259px;font-size:12px;line-height:15px;color:#8a8a8a">검색</div>
<svg style="left:1886px;top:259px;" width="16" height="16" viewBox="0 0 16 16"><circle cx="10" cy="6" r="5" fill="none" stroke="#ddd" stroke-width="1.2"/><path d="M6.5 9.5 L1 15" stroke="#ddd" stroke-width="1.3"/></svg>
<div style="left:1583px;top:298px;width:330px;height:275px;border:1px solid #5a5a5a;background:#292929"></div>
<div style="left:1588px;top:302px;width:13px;height:13px;background:#3aa55a"></div>
<svg style="left:1590px;top:305px;" width="9" height="7" viewBox="0 0 9 7"><path d="M0.5 3.5 L3.3 6 L8.5 0.8" fill="none" stroke="#fff" stroke-width="1.2"/></svg>
<div class="t" style="left:1607px;top:301px;font-size:13px;line-height:16px;font-weight:bold">구분</div>
<div style="left:1588px;top:323px;width:13px;height:13px;background:#3aa55a"></div>
<svg style="left:1590px;top:326px;" width="9" height="7" viewBox="0 0 9 7"><path d="M0.5 3.5 L3.3 6 L8.5 0.8" fill="none" stroke="#fff" stroke-width="1.2"/></svg>
<div class="t" style="left:1607px;top:322px;font-size:13px;line-height:16px;font-weight:bold">지표</div>
<div style="left:1588px;top:344px;width:13px;height:13px;border:1px solid #8a8a8a"></div>
<div class="t" style="left:1607px;top:343px;font-size:13px;line-height:16px;">1</div>
<div style="left:1588px;top:365px;width:13px;height:13px;border:1px solid #8a8a8a"></div>
<div class="t" style="left:1607px;top:364px;font-size:13px;line-height:16px;">2</div>
<div style="left:1588px;top:386px;width:13px;height:13px;border:1px solid #8a8a8a"></div>
<div class="t" style="left:1607px;top:385px;font-size:13px;line-height:16px;">3</div>
<div style="left:1588px;top:407px;width:13px;height:13px;border:1px solid #8a8a8a"></div>
<div class="t" style="left:1607px;top:406px;font-size:13px;line-height:16px;">4</div>
<div style="left:1588px;top:428px;width:13px;height:13px;border:1px solid #8a8a8a"></div>
<div class="t" style="left:1607px;top:427px;font-size:13px;line-height:16px;">5</div>
<div style="left:1588px;top:449px;width:13px;height:13px;border:1px solid #8a8a8a"></div>
<div class="t" style="left:1607px;top:448px;font-size:13px;line-height:16px;">6</div>
<div style="left:1588px;top:470px;width:13px;height:13px;border:1px solid #8a8a8a"></div>
<div class="t" style="left:1607px;top:469px;font-size:13px;line-height:16px;">7</div>
<div style="left:1588px;top:491px;width:13px;height:13px;border:1px solid #8a8a8a"></div>
<div class="t" style="left:1607px;top:490px;font-size:13px;line-height:16px;">8</div>
<div style="left:1588px;top:512px;width:13px;height:13px;background:#3aa55a"></div>
<svg style="left:1590px;top:515px;" width="9" height="7" viewBox="0 0 9 7"><path d="M0.5 3.5 L3.3 6 L8.5 0.8" fill="none" stroke="#fff" stroke-width="1.2"/></svg>
<div class="t" style="left:1607px;top:511px;font-size:13px;line-height:16px;font-weight:bold">9</div>
<div style="left:1588px;top:533px;width:13px;height:13px;border:1px solid #8a8a8a"></div>
<div class="t" style="left:1607px;top:532px;font-size:13px;line-height:16px;">10</div>
<div style="left:1588px;top:554px;width:13px;height:13px;border:1px solid #8a8a8a"></div>
<div class="t" style="left:1607px;top:553px;font-size:13px;line-height:16px;">11</div>
<svg style="left:1872px;top:304px;" width="12" height="13" viewBox="0 0 12 13"><path d="M0.5 0.5 H11.5 L7 6 V12.5 L5 11.5 V6 Z" fill="none" stroke="#ddd" stroke-width="1"/></svg>
<div style="left:1889px;top:299px;width:12px;height:273px;background:#1e1e1e"></div>
<svg style="left:1892px;top:303px;" width="9" height="8" viewBox="0 0 9 8"><path d="M4.5 0.5 L9 7.5 H0 Z" fill="#9a9a9a"/></svg>
<div style="left:1892px;top:315px;width:9px;height:155px;background:#9a9a9a"></div>
<svg style="left:1892px;top:560px;" width="9" height="7" viewBox="0 0 9 7"><path d="M0 0.5 H9 L4.5 6.5 Z" fill="#9a9a9a"/></svg>
<div style="left:1585px;top:590px;width:316px;height:1px;border-top:1px dotted #9a9a9a"></div>
<div class="t" style="left:1587px;top:594px;font-size:12px;line-height:15px">아래 영역 사이에 필드를 끌어 놓으십시오.</div>
<svg style="left:1590px;top:629px;" width="11" height="11" viewBox="0 0 11 11"><path d="M0 0 H11 L6.5 5 V11 L4.5 10 V5 Z" fill="#eee"/></svg>
<div class="t" style="left:1610px;top:628px;font-size:12px;line-height:15px">필터</div>
<svg style="left:1753px;top:630px;" width="10" height="10" viewBox="0 0 10 10"><path d="M0.5 0 V10 M2.5 0 V10 M4.5 0 V10 M6.5 0 V10 M8.5 0 V10" stroke="#eee" stroke-width="1"/><rect x="0" y="0" width="2" height="10" fill="#eee"/></svg>
<div class="t" style="left:1772px;top:628px;font-size:12px;line-height:15px">열</div>
<div style="left:1745px;top:627px;width:1px;height:300px;background:#3c3c3c"></div>
<div style="left:1586px;top:776px;width:315px;height:1px;background:#3c3c3c"></div>
<div style="left:1586px;top:648px;width:153px;height:122px;background:#2b2b2b"></div>
<div style="left:1748px;top:648px;width:160px;height:122px;background:#2b2b2b"></div>
<div style="left:1749px;top:650px;width:160px;height:21px;border:1px solid #5a5a5a;background:#2b2b2b"></div>
<div class="t" style="left:1757px;top:653px;font-size:12px;line-height:15px">구분</div>
<svg style="left:1892px;top:658px;" width="6" height="4.0" viewBox="0 0 6 4.0"><path d="M0.5 0.5 L3.0 3.0 L5.5 0.5" fill="none" stroke="#ddd" stroke-width="1.3"/></svg>
<svg style="left:1591px;top:786px;" width="11" height="10" viewBox="0 0 11 10"><path d="M0 0.5 H11 M0 3 H11 M0 5.5 H11 M0 8 H11" stroke="#eee" stroke-width="1.2"/></svg>
<div class="t" style="left:1609px;top:784px;font-size:12px;line-height:15px">행</div>
<div class="t" style="left:1753px;top:782px;font-size:14px;line-height:17px;font-weight:bold">Σ</div>
<div class="t" style="left:1772px;top:784px;font-size:12px;line-height:15px">값</div>
<div style="left:1586px;top:804px;width:153px;height:122px;background:#2b2b2b"></div>
<div style="left:1748px;top:804px;width:160px;height:122px;background:#2b2b2b"></div>
<div style="left:1587px;top:806px;width:152px;height:21px;border:1px solid #5a5a5a;background:#2b2b2b"></div>
<div class="t" style="left:1595px;top:809px;font-size:12px;line-height:15px">지표</div>
<svg style="left:1724px;top:814px;" width="6" height="4.0" viewBox="0 0 6 4.0"><path d="M0.5 0.5 L3.0 3.0 L5.5 0.5" fill="none" stroke="#ddd" stroke-width="1.3"/></svg>
<div style="left:1749px;top:806px;width:160px;height:21px;border:1px solid #5a5a5a;background:#2b2b2b"></div>
<div class="t" style="left:1757px;top:809px;font-size:12px;line-height:15px">합계 : 9</div>
<svg style="left:1892px;top:814px;" width="6" height="4.0" viewBox="0 0 6 4.0"><path d="M0.5 0.5 L3.0 3.0 L5.5 0.5" fill="none" stroke="#ddd" stroke-width="1.3"/></svg>
<div style="left:1589px;top:952px;width:13px;height:13px;border:1px solid #8a8a8a;border-radius:2px"></div>
<div class="t" style="left:1609px;top:950px;font-size:12px;line-height:15px">나중에 레이아웃 업데이트</div>
<div style="left:1846px;top:947px;width:64px;height:24px;border:1px solid #3a3a3a"></div>
<div class="t" style="left:1853px;top:951px;font-size:12px;line-height:15px;color:#666">업데이트</div></body></html>
